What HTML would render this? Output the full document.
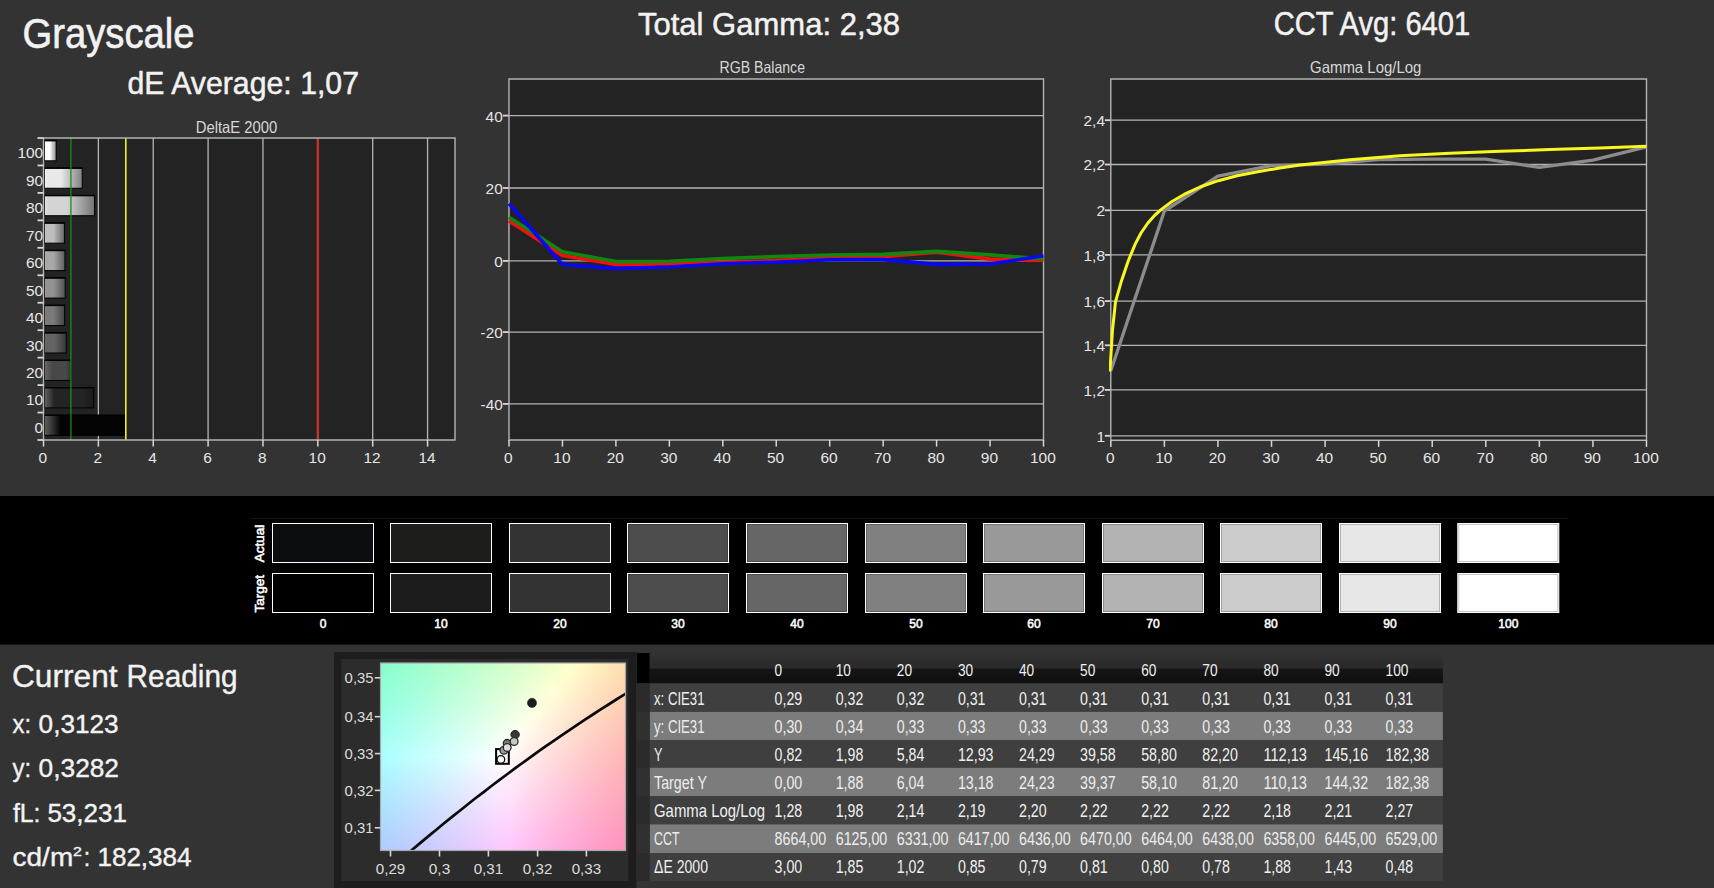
<!DOCTYPE html>
<html><head><meta charset="utf-8"><title>Grayscale</title>
<style>
html,body{margin:0;padding:0;background:#333333;}
body{width:1714px;height:888px;overflow:hidden;font-family:"Liberation Sans", sans-serif;}
svg{display:block;font-family:"Liberation Sans", sans-serif;}
</style></head><body>
<svg width="1714" height="888" viewBox="0 0 1714 888">
<defs>
<linearGradient id="b100" x1="0" x2="1" y1="0" y2="0"><stop offset="0" stop-color="rgb(255,255,255)"/><stop offset="0.08" stop-color="rgb(255,255,255)"/><stop offset="0.45" stop-color="rgb(255,255,255)"/><stop offset="1" stop-color="rgb(140,140,140)"/></linearGradient>
<linearGradient id="b90" x1="0" x2="1" y1="0" y2="0"><stop offset="0" stop-color="rgb(246,246,246)"/><stop offset="0.08" stop-color="rgb(232,232,232)"/><stop offset="0.45" stop-color="rgb(232,232,232)"/><stop offset="1" stop-color="rgb(127,127,127)"/></linearGradient>
<linearGradient id="b80" x1="0" x2="1" y1="0" y2="0"><stop offset="0" stop-color="rgb(226,226,226)"/><stop offset="0.08" stop-color="rgb(212,212,212)"/><stop offset="0.45" stop-color="rgb(212,212,212)"/><stop offset="1" stop-color="rgb(116,116,116)"/></linearGradient>
<linearGradient id="b70" x1="0" x2="1" y1="0" y2="0"><stop offset="0" stop-color="rgb(204,204,204)"/><stop offset="0.08" stop-color="rgb(190,190,190)"/><stop offset="0.45" stop-color="rgb(190,190,190)"/><stop offset="1" stop-color="rgb(104,104,104)"/></linearGradient>
<linearGradient id="b60" x1="0" x2="1" y1="0" y2="0"><stop offset="0" stop-color="rgb(182,182,182)"/><stop offset="0.08" stop-color="rgb(168,168,168)"/><stop offset="0.45" stop-color="rgb(168,168,168)"/><stop offset="1" stop-color="rgb(92,92,92)"/></linearGradient>
<linearGradient id="b50" x1="0" x2="1" y1="0" y2="0"><stop offset="0" stop-color="rgb(160,160,160)"/><stop offset="0.08" stop-color="rgb(146,146,146)"/><stop offset="0.45" stop-color="rgb(146,146,146)"/><stop offset="1" stop-color="rgb(80,80,80)"/></linearGradient>
<linearGradient id="b40" x1="0" x2="1" y1="0" y2="0"><stop offset="0" stop-color="rgb(136,136,136)"/><stop offset="0.08" stop-color="rgb(122,122,122)"/><stop offset="0.45" stop-color="rgb(122,122,122)"/><stop offset="1" stop-color="rgb(67,67,67)"/></linearGradient>
<linearGradient id="b30" x1="0" x2="1" y1="0" y2="0"><stop offset="0" stop-color="rgb(114,114,114)"/><stop offset="0.08" stop-color="rgb(100,100,100)"/><stop offset="0.45" stop-color="rgb(100,100,100)"/><stop offset="1" stop-color="rgb(55,55,55)"/></linearGradient>
<linearGradient id="b20" x1="0" x2="1" y1="0" y2="0"><stop offset="0" stop-color="rgb(104,104,104)"/><stop offset="0.3" stop-color="rgb(72,72,72)"/><stop offset="0.8" stop-color="rgb(72,72,72)"/><stop offset="1" stop-color="rgb(54,54,54)"/></linearGradient>
<linearGradient id="b10" x1="0" x2="1" y1="0" y2="0"><stop offset="0" stop-color="rgb(100,100,100)"/><stop offset="0.2" stop-color="rgb(36,36,36)"/><stop offset="0.8" stop-color="rgb(36,36,36)"/><stop offset="1" stop-color="rgb(27,27,27)"/></linearGradient>
<linearGradient id="b0" x1="0" x2="1" y1="0" y2="0"><stop offset="0" stop-color="rgb(96,96,96)"/><stop offset="0.2" stop-color="rgb(4,4,4)"/><stop offset="0.8" stop-color="rgb(4,4,4)"/><stop offset="1" stop-color="rgb(3,3,3)"/></linearGradient>
<linearGradient id="hdr" x1="0" x2="0" y1="0" y2="1"><stop offset="0" stop-color="#323232"/><stop offset="0.5" stop-color="#2a2a2a"/><stop offset="0.52" stop-color="#161616"/><stop offset="1" stop-color="#0e0e0e"/></linearGradient>
<radialGradient id="cW" cx="0.50" cy="0.52" r="0.40"><stop offset="0" stop-color="#fff" stop-opacity="1"/><stop offset="0.25" stop-color="#fff" stop-opacity="0.9"/><stop offset="1" stop-color="#fff" stop-opacity="0"/></radialGradient>
<linearGradient id="cTop" x1="0" x2="1" y1="0" y2="0"><stop offset="0" stop-color="#8df7c0"/><stop offset="0.35" stop-color="#b8ffc6"/><stop offset="0.72" stop-color="#ffffc4"/><stop offset="1" stop-color="#ffdcae"/></linearGradient>
<linearGradient id="cBot" x1="0" x2="1" y1="0" y2="0"><stop offset="0" stop-color="#a4c0ff"/><stop offset="0.30" stop-color="#d0c8ff"/><stop offset="0.55" stop-color="#ffc4f8"/><stop offset="1" stop-color="#ff8cb0"/></linearGradient>
<linearGradient id="cMid" x1="0" x2="1" y1="0" y2="0"><stop offset="0" stop-color="#a6f4ff"/><stop offset="0.3" stop-color="#d4ffff"/><stop offset="0.5" stop-color="#ffffff"/><stop offset="0.75" stop-color="#ffe0d8"/><stop offset="1" stop-color="#ffb4b0"/></linearGradient>
<linearGradient id="mTop" x1="0" x2="0" y1="0" y2="1"><stop offset="0" stop-color="#fff"/><stop offset="0.55" stop-color="#000"/></linearGradient>
<linearGradient id="mBot" x1="0" x2="0" y1="0" y2="1"><stop offset="0.5" stop-color="#000"/><stop offset="1" stop-color="#fff"/></linearGradient>
<mask id="mkTop" maskContentUnits="objectBoundingBox"><rect x="0" y="0" width="1" height="1" fill="url(#mTop)"/></mask>
<mask id="mkBot" maskContentUnits="objectBoundingBox"><rect x="0" y="0" width="1" height="1" fill="url(#mBot)"/></mask>
<clipPath id="cieclip"><rect x="380.5" y="663" width="245" height="187.5"/></clipPath>
<clipPath id="rgbclip"><rect x="508" y="79" width="537" height="362"/></clipPath>
<clipPath id="gamclip"><rect x="1109" y="79" width="539" height="362"/></clipPath>

</defs>
<rect x="0.00" y="0.00" width="1714.00" height="888.00" fill="#333333"/>
<rect x="0.00" y="496.00" width="1714.00" height="148.50" fill="#000000"/>
<line x1="250.00" y1="518.50" x2="1568.00" y2="518.50" stroke="#131313" stroke-width="1"/>
<text x="22.5" y="47.9" font-size="42" text-anchor="start" fill="#f2f2f2" font-weight="normal" textLength="172.0" lengthAdjust="spacingAndGlyphs" stroke="#f2f2f2" stroke-width="0.6">Grayscale</text>
<text x="127.5" y="94.3" font-size="32" text-anchor="start" fill="#f2f2f2" font-weight="normal" textLength="231.5" lengthAdjust="spacingAndGlyphs" stroke="#f2f2f2" stroke-width="0.5">dE Average: 1,07</text>
<text x="638.0" y="35.0" font-size="32" text-anchor="start" fill="#f2f2f2" font-weight="normal" textLength="262.0" lengthAdjust="spacingAndGlyphs" stroke="#f2f2f2" stroke-width="0.5">Total Gamma: 2,38</text>
<text x="1273.7" y="35.1" font-size="32.5" text-anchor="start" fill="#f2f2f2" font-weight="normal" textLength="196.5" lengthAdjust="spacingAndGlyphs" stroke="#f2f2f2" stroke-width="0.5">CCT Avg: 6401</text>
<text x="195.7" y="133.2" font-size="16.5" text-anchor="start" fill="#d8d8d8" font-weight="normal" textLength="81.6" lengthAdjust="spacingAndGlyphs">DeltaE 2000</text>
<text x="719.6" y="73.1" font-size="16.5" text-anchor="start" fill="#d8d8d8" font-weight="normal" textLength="85.4" lengthAdjust="spacingAndGlyphs">RGB Balance</text>
<text x="1310.0" y="73.3" font-size="16.5" text-anchor="start" fill="#d8d8d8" font-weight="normal" textLength="111.4" lengthAdjust="spacingAndGlyphs">Gamma Log/Log</text>
<rect x="43.50" y="138.00" width="411.50" height="302.00" fill="#232323"/>
<line x1="98.37" y1="138.00" x2="98.37" y2="440.00" stroke="#b4b4b4" stroke-width="1.3"/>
<line x1="153.23" y1="138.00" x2="153.23" y2="440.00" stroke="#b4b4b4" stroke-width="1.3"/>
<line x1="208.10" y1="138.00" x2="208.10" y2="440.00" stroke="#b4b4b4" stroke-width="1.3"/>
<line x1="262.97" y1="138.00" x2="262.97" y2="440.00" stroke="#b4b4b4" stroke-width="1.3"/>
<line x1="372.70" y1="138.00" x2="372.70" y2="440.00" stroke="#b4b4b4" stroke-width="1.3"/>
<line x1="427.57" y1="138.00" x2="427.57" y2="440.00" stroke="#b4b4b4" stroke-width="1.3"/>
<rect x="44.40" y="140.90" width="11.77" height="19.90" fill="url(#b100)" stroke="#000" stroke-width="1.0"/>
<line x1="43.90" y1="140.40" x2="56.67" y2="140.40" stroke="#000" stroke-width="1.1"/>
<rect x="44.40" y="168.35" width="37.83" height="19.90" fill="url(#b90)" stroke="#000" stroke-width="1.0"/>
<line x1="43.90" y1="167.85" x2="82.73" y2="167.85" stroke="#000" stroke-width="1.1"/>
<rect x="44.40" y="195.81" width="50.17" height="19.90" fill="url(#b80)" stroke="#000" stroke-width="1.0"/>
<line x1="43.90" y1="195.31" x2="95.07" y2="195.31" stroke="#000" stroke-width="1.1"/>
<rect x="44.40" y="223.26" width="20.00" height="19.90" fill="url(#b70)" stroke="#000" stroke-width="1.0"/>
<line x1="43.90" y1="222.76" x2="64.90" y2="222.76" stroke="#000" stroke-width="1.1"/>
<rect x="44.40" y="250.72" width="20.55" height="19.90" fill="url(#b60)" stroke="#000" stroke-width="1.0"/>
<line x1="43.90" y1="250.22" x2="65.45" y2="250.22" stroke="#000" stroke-width="1.1"/>
<rect x="44.40" y="278.17" width="20.82" height="19.90" fill="url(#b50)" stroke="#000" stroke-width="1.0"/>
<line x1="43.90" y1="277.67" x2="65.72" y2="277.67" stroke="#000" stroke-width="1.1"/>
<rect x="44.40" y="305.63" width="20.27" height="19.90" fill="url(#b40)" stroke="#000" stroke-width="1.0"/>
<line x1="43.90" y1="305.13" x2="65.17" y2="305.13" stroke="#000" stroke-width="1.1"/>
<rect x="44.40" y="333.08" width="21.92" height="19.90" fill="url(#b30)" stroke="#000" stroke-width="1.0"/>
<line x1="43.90" y1="332.58" x2="66.82" y2="332.58" stroke="#000" stroke-width="1.1"/>
<rect x="44.40" y="360.54" width="26.58" height="19.90" fill="url(#b20)" stroke="#000" stroke-width="1.0"/>
<line x1="43.90" y1="360.04" x2="71.48" y2="360.04" stroke="#000" stroke-width="1.1"/>
<rect x="44.40" y="387.99" width="49.35" height="19.90" fill="url(#b10)" stroke="#000" stroke-width="1.0"/>
<line x1="43.90" y1="387.49" x2="94.25" y2="387.49" stroke="#000" stroke-width="1.1"/>
<rect x="44.40" y="415.45" width="80.90" height="19.90" fill="url(#b0)" stroke="#000" stroke-width="1.0"/>
<line x1="43.90" y1="414.95" x2="125.80" y2="414.95" stroke="#000" stroke-width="1.1"/>
<line x1="70.93" y1="138.00" x2="70.93" y2="440.00" stroke="#1a8c1a" stroke-width="1.3"/>
<line x1="125.80" y1="138.00" x2="125.80" y2="440.00" stroke="#f0f020" stroke-width="1.6"/>
<line x1="317.83" y1="138.00" x2="317.83" y2="440.00" stroke="#c4302b" stroke-width="2.4"/>
<path d="M43.5 138.0 H455.0 V440.0 H43.5 Z" fill="none" stroke="#b4b4b4" stroke-width="1.4"/>
<line x1="37.50" y1="138.00" x2="43.50" y2="138.00" stroke="#d6d6d6" stroke-width="1.8"/>
<line x1="37.50" y1="165.45" x2="43.50" y2="165.45" stroke="#d6d6d6" stroke-width="1.8"/>
<line x1="37.50" y1="192.91" x2="43.50" y2="192.91" stroke="#d6d6d6" stroke-width="1.8"/>
<line x1="37.50" y1="220.36" x2="43.50" y2="220.36" stroke="#d6d6d6" stroke-width="1.8"/>
<line x1="37.50" y1="247.82" x2="43.50" y2="247.82" stroke="#d6d6d6" stroke-width="1.8"/>
<line x1="37.50" y1="275.27" x2="43.50" y2="275.27" stroke="#d6d6d6" stroke-width="1.8"/>
<line x1="37.50" y1="302.73" x2="43.50" y2="302.73" stroke="#d6d6d6" stroke-width="1.8"/>
<line x1="37.50" y1="330.18" x2="43.50" y2="330.18" stroke="#d6d6d6" stroke-width="1.8"/>
<line x1="37.50" y1="357.64" x2="43.50" y2="357.64" stroke="#d6d6d6" stroke-width="1.8"/>
<line x1="37.50" y1="385.09" x2="43.50" y2="385.09" stroke="#d6d6d6" stroke-width="1.8"/>
<line x1="37.50" y1="412.55" x2="43.50" y2="412.55" stroke="#d6d6d6" stroke-width="1.8"/>
<line x1="37.50" y1="440.00" x2="43.50" y2="440.00" stroke="#d6d6d6" stroke-width="1.8"/>
<text x="43.2" y="158.3" font-size="15.2" text-anchor="end" fill="#e6e6e6" font-weight="normal" textLength="25.8" lengthAdjust="spacingAndGlyphs">100</text>
<text x="43.2" y="185.8" font-size="15.2" text-anchor="end" fill="#e6e6e6" font-weight="normal" textLength="17.2" lengthAdjust="spacingAndGlyphs">90</text>
<text x="43.2" y="213.2" font-size="15.2" text-anchor="end" fill="#e6e6e6" font-weight="normal" textLength="17.2" lengthAdjust="spacingAndGlyphs">80</text>
<text x="43.2" y="240.7" font-size="15.2" text-anchor="end" fill="#e6e6e6" font-weight="normal" textLength="17.2" lengthAdjust="spacingAndGlyphs">70</text>
<text x="43.2" y="268.1" font-size="15.2" text-anchor="end" fill="#e6e6e6" font-weight="normal" textLength="17.2" lengthAdjust="spacingAndGlyphs">60</text>
<text x="43.2" y="295.6" font-size="15.2" text-anchor="end" fill="#e6e6e6" font-weight="normal" textLength="17.2" lengthAdjust="spacingAndGlyphs">50</text>
<text x="43.2" y="323.1" font-size="15.2" text-anchor="end" fill="#e6e6e6" font-weight="normal" textLength="17.2" lengthAdjust="spacingAndGlyphs">40</text>
<text x="43.2" y="350.5" font-size="15.2" text-anchor="end" fill="#e6e6e6" font-weight="normal" textLength="17.2" lengthAdjust="spacingAndGlyphs">30</text>
<text x="43.2" y="378.0" font-size="15.2" text-anchor="end" fill="#e6e6e6" font-weight="normal" textLength="17.2" lengthAdjust="spacingAndGlyphs">20</text>
<text x="43.2" y="405.4" font-size="15.2" text-anchor="end" fill="#e6e6e6" font-weight="normal" textLength="17.2" lengthAdjust="spacingAndGlyphs">10</text>
<text x="43.2" y="432.9" font-size="15.2" text-anchor="end" fill="#e6e6e6" font-weight="normal" textLength="8.6" lengthAdjust="spacingAndGlyphs">0</text>
<line x1="43.50" y1="440.00" x2="43.50" y2="446.60" stroke="#d6d6d6" stroke-width="1.5"/>
<text x="42.9" y="462.8" font-size="15.2" text-anchor="middle" fill="#e6e6e6" font-weight="normal" textLength="8.6" lengthAdjust="spacingAndGlyphs">0</text>
<line x1="98.37" y1="440.00" x2="98.37" y2="446.60" stroke="#d6d6d6" stroke-width="1.5"/>
<text x="97.8" y="462.8" font-size="15.2" text-anchor="middle" fill="#e6e6e6" font-weight="normal" textLength="8.6" lengthAdjust="spacingAndGlyphs">2</text>
<line x1="153.23" y1="440.00" x2="153.23" y2="446.60" stroke="#d6d6d6" stroke-width="1.5"/>
<text x="152.6" y="462.8" font-size="15.2" text-anchor="middle" fill="#e6e6e6" font-weight="normal" textLength="8.6" lengthAdjust="spacingAndGlyphs">4</text>
<line x1="208.10" y1="440.00" x2="208.10" y2="446.60" stroke="#d6d6d6" stroke-width="1.5"/>
<text x="207.5" y="462.8" font-size="15.2" text-anchor="middle" fill="#e6e6e6" font-weight="normal" textLength="8.6" lengthAdjust="spacingAndGlyphs">6</text>
<line x1="262.97" y1="440.00" x2="262.97" y2="446.60" stroke="#d6d6d6" stroke-width="1.5"/>
<text x="262.4" y="462.8" font-size="15.2" text-anchor="middle" fill="#e6e6e6" font-weight="normal" textLength="8.6" lengthAdjust="spacingAndGlyphs">8</text>
<line x1="317.83" y1="440.00" x2="317.83" y2="446.60" stroke="#d6d6d6" stroke-width="1.5"/>
<text x="317.2" y="462.8" font-size="15.2" text-anchor="middle" fill="#e6e6e6" font-weight="normal" textLength="17.2" lengthAdjust="spacingAndGlyphs">10</text>
<line x1="372.70" y1="440.00" x2="372.70" y2="446.60" stroke="#d6d6d6" stroke-width="1.5"/>
<text x="372.1" y="462.8" font-size="15.2" text-anchor="middle" fill="#e6e6e6" font-weight="normal" textLength="17.2" lengthAdjust="spacingAndGlyphs">12</text>
<line x1="427.57" y1="440.00" x2="427.57" y2="446.60" stroke="#d6d6d6" stroke-width="1.5"/>
<text x="427.0" y="462.8" font-size="15.2" text-anchor="middle" fill="#e6e6e6" font-weight="normal" textLength="17.2" lengthAdjust="spacingAndGlyphs">14</text>
<rect x="509.00" y="79.00" width="534.50" height="361.00" fill="#232323"/>
<line x1="509.00" y1="115.60" x2="1043.50" y2="115.60" stroke="#b4b4b4" stroke-width="1.3"/>
<line x1="503.00" y1="115.60" x2="509.00" y2="115.60" stroke="#d6d6d6" stroke-width="1.8"/>
<text x="502.8" y="121.5" font-size="15.2" text-anchor="end" fill="#e6e6e6" font-weight="normal" textLength="17.2" lengthAdjust="spacingAndGlyphs">40</text>
<line x1="509.00" y1="188.00" x2="1043.50" y2="188.00" stroke="#b4b4b4" stroke-width="1.3"/>
<line x1="503.00" y1="188.00" x2="509.00" y2="188.00" stroke="#d6d6d6" stroke-width="1.8"/>
<text x="502.8" y="193.9" font-size="15.2" text-anchor="end" fill="#e6e6e6" font-weight="normal" textLength="17.2" lengthAdjust="spacingAndGlyphs">20</text>
<line x1="509.00" y1="260.90" x2="1043.50" y2="260.90" stroke="#b4b4b4" stroke-width="1.3"/>
<line x1="503.00" y1="260.90" x2="509.00" y2="260.90" stroke="#d6d6d6" stroke-width="1.8"/>
<text x="502.8" y="266.8" font-size="15.2" text-anchor="end" fill="#e6e6e6" font-weight="normal" textLength="8.6" lengthAdjust="spacingAndGlyphs">0</text>
<line x1="509.00" y1="332.10" x2="1043.50" y2="332.10" stroke="#b4b4b4" stroke-width="1.3"/>
<line x1="503.00" y1="332.10" x2="509.00" y2="332.10" stroke="#d6d6d6" stroke-width="1.8"/>
<text x="502.8" y="338.0" font-size="15.2" text-anchor="end" fill="#e6e6e6" font-weight="normal" textLength="22.2" lengthAdjust="spacingAndGlyphs">-20</text>
<line x1="509.00" y1="403.90" x2="1043.50" y2="403.90" stroke="#b4b4b4" stroke-width="1.3"/>
<line x1="503.00" y1="403.90" x2="509.00" y2="403.90" stroke="#d6d6d6" stroke-width="1.8"/>
<text x="502.8" y="409.8" font-size="15.2" text-anchor="end" fill="#e6e6e6" font-weight="normal" textLength="22.2" lengthAdjust="spacingAndGlyphs">-40</text>
<path d="M509.0 79.0 H1043.5 V440.0 H509.0 Z" fill="none" stroke="#b4b4b4" stroke-width="1.4"/>
<line x1="509.00" y1="440.00" x2="509.00" y2="446.60" stroke="#d6d6d6" stroke-width="1.5"/>
<text x="508.4" y="462.8" font-size="15.2" text-anchor="middle" fill="#e6e6e6" font-weight="normal" textLength="8.6" lengthAdjust="spacingAndGlyphs">0</text>
<line x1="562.45" y1="440.00" x2="562.45" y2="446.60" stroke="#d6d6d6" stroke-width="1.5"/>
<text x="561.9" y="462.8" font-size="15.2" text-anchor="middle" fill="#e6e6e6" font-weight="normal" textLength="17.2" lengthAdjust="spacingAndGlyphs">10</text>
<line x1="615.90" y1="440.00" x2="615.90" y2="446.60" stroke="#d6d6d6" stroke-width="1.5"/>
<text x="615.3" y="462.8" font-size="15.2" text-anchor="middle" fill="#e6e6e6" font-weight="normal" textLength="17.2" lengthAdjust="spacingAndGlyphs">20</text>
<line x1="669.35" y1="440.00" x2="669.35" y2="446.60" stroke="#d6d6d6" stroke-width="1.5"/>
<text x="668.8" y="462.8" font-size="15.2" text-anchor="middle" fill="#e6e6e6" font-weight="normal" textLength="17.2" lengthAdjust="spacingAndGlyphs">30</text>
<line x1="722.80" y1="440.00" x2="722.80" y2="446.60" stroke="#d6d6d6" stroke-width="1.5"/>
<text x="722.2" y="462.8" font-size="15.2" text-anchor="middle" fill="#e6e6e6" font-weight="normal" textLength="17.2" lengthAdjust="spacingAndGlyphs">40</text>
<line x1="776.25" y1="440.00" x2="776.25" y2="446.60" stroke="#d6d6d6" stroke-width="1.5"/>
<text x="775.6" y="462.8" font-size="15.2" text-anchor="middle" fill="#e6e6e6" font-weight="normal" textLength="17.2" lengthAdjust="spacingAndGlyphs">50</text>
<line x1="829.70" y1="440.00" x2="829.70" y2="446.60" stroke="#d6d6d6" stroke-width="1.5"/>
<text x="829.1" y="462.8" font-size="15.2" text-anchor="middle" fill="#e6e6e6" font-weight="normal" textLength="17.2" lengthAdjust="spacingAndGlyphs">60</text>
<line x1="883.15" y1="440.00" x2="883.15" y2="446.60" stroke="#d6d6d6" stroke-width="1.5"/>
<text x="882.6" y="462.8" font-size="15.2" text-anchor="middle" fill="#e6e6e6" font-weight="normal" textLength="17.2" lengthAdjust="spacingAndGlyphs">70</text>
<line x1="936.60" y1="440.00" x2="936.60" y2="446.60" stroke="#d6d6d6" stroke-width="1.5"/>
<text x="936.0" y="462.8" font-size="15.2" text-anchor="middle" fill="#e6e6e6" font-weight="normal" textLength="17.2" lengthAdjust="spacingAndGlyphs">80</text>
<line x1="990.05" y1="440.00" x2="990.05" y2="446.60" stroke="#d6d6d6" stroke-width="1.5"/>
<text x="989.4" y="462.8" font-size="15.2" text-anchor="middle" fill="#e6e6e6" font-weight="normal" textLength="17.2" lengthAdjust="spacingAndGlyphs">90</text>
<line x1="1043.50" y1="440.00" x2="1043.50" y2="446.60" stroke="#d6d6d6" stroke-width="1.5"/>
<text x="1042.9" y="462.8" font-size="15.2" text-anchor="middle" fill="#e6e6e6" font-weight="normal" textLength="25.8" lengthAdjust="spacingAndGlyphs">100</text>
<polyline points="509.0,221.1 562.5,255.6 615.9,264.6 669.4,264.0 722.8,262.2 776.2,260.6 829.7,257.2 883.2,256.7 936.6,252.1 990.0,259.1 1043.5,260.4" fill="none" stroke="#f01010" stroke-width="3.6" stroke-linejoin="round" clip-path="url(#rgbclip)"/>
<polyline points="509.0,217.3 562.5,251.8 615.9,261.6 669.4,261.2 722.8,258.6 776.2,256.6 829.7,255.0 883.2,254.4 936.6,251.4 990.0,254.9 1043.5,259.0" fill="none" stroke="#108810" stroke-width="3.6" stroke-linejoin="round" clip-path="url(#rgbclip)"/>
<polyline points="509.0,203.6 562.5,264.5 615.9,268.6 669.4,267.0 722.8,263.8 776.2,262.2 829.7,259.8 883.2,259.6 936.6,264.4 990.0,264.0 1043.5,255.8" fill="none" stroke="#0808f0" stroke-width="3.6" stroke-linejoin="round" clip-path="url(#rgbclip)"/>
<rect x="1110.80" y="79.00" width="535.70" height="361.30" fill="#232323"/>
<line x1="1110.80" y1="120.20" x2="1646.50" y2="120.20" stroke="#b4b4b4" stroke-width="1.3"/>
<line x1="1104.80" y1="120.20" x2="1110.80" y2="120.20" stroke="#d6d6d6" stroke-width="1.8"/>
<text x="1105.0" y="126.1" font-size="15.2" text-anchor="end" fill="#e6e6e6" font-weight="normal" textLength="21.5" lengthAdjust="spacingAndGlyphs">2,4</text>
<line x1="1110.80" y1="164.50" x2="1646.50" y2="164.50" stroke="#b4b4b4" stroke-width="1.3"/>
<line x1="1104.80" y1="164.50" x2="1110.80" y2="164.50" stroke="#d6d6d6" stroke-width="1.8"/>
<text x="1105.0" y="170.4" font-size="15.2" text-anchor="end" fill="#e6e6e6" font-weight="normal" textLength="21.5" lengthAdjust="spacingAndGlyphs">2,2</text>
<line x1="1110.80" y1="210.30" x2="1646.50" y2="210.30" stroke="#b4b4b4" stroke-width="1.3"/>
<line x1="1104.80" y1="210.30" x2="1110.80" y2="210.30" stroke="#d6d6d6" stroke-width="1.8"/>
<text x="1105.0" y="216.2" font-size="15.2" text-anchor="end" fill="#e6e6e6" font-weight="normal" textLength="8.6" lengthAdjust="spacingAndGlyphs">2</text>
<line x1="1110.80" y1="254.90" x2="1646.50" y2="254.90" stroke="#b4b4b4" stroke-width="1.3"/>
<line x1="1104.80" y1="254.90" x2="1110.80" y2="254.90" stroke="#d6d6d6" stroke-width="1.8"/>
<text x="1105.0" y="260.8" font-size="15.2" text-anchor="end" fill="#e6e6e6" font-weight="normal" textLength="21.5" lengthAdjust="spacingAndGlyphs">1,8</text>
<line x1="1110.80" y1="301.10" x2="1646.50" y2="301.10" stroke="#b4b4b4" stroke-width="1.3"/>
<line x1="1104.80" y1="301.10" x2="1110.80" y2="301.10" stroke="#d6d6d6" stroke-width="1.8"/>
<text x="1105.0" y="307.0" font-size="15.2" text-anchor="end" fill="#e6e6e6" font-weight="normal" textLength="21.5" lengthAdjust="spacingAndGlyphs">1,6</text>
<line x1="1110.80" y1="345.30" x2="1646.50" y2="345.30" stroke="#b4b4b4" stroke-width="1.3"/>
<line x1="1104.80" y1="345.30" x2="1110.80" y2="345.30" stroke="#d6d6d6" stroke-width="1.8"/>
<text x="1105.0" y="351.2" font-size="15.2" text-anchor="end" fill="#e6e6e6" font-weight="normal" textLength="21.5" lengthAdjust="spacingAndGlyphs">1,4</text>
<line x1="1110.80" y1="389.90" x2="1646.50" y2="389.90" stroke="#b4b4b4" stroke-width="1.3"/>
<line x1="1104.80" y1="389.90" x2="1110.80" y2="389.90" stroke="#d6d6d6" stroke-width="1.8"/>
<text x="1105.0" y="395.8" font-size="15.2" text-anchor="end" fill="#e6e6e6" font-weight="normal" textLength="21.5" lengthAdjust="spacingAndGlyphs">1,2</text>
<line x1="1110.80" y1="435.80" x2="1646.50" y2="435.80" stroke="#b4b4b4" stroke-width="1.3"/>
<line x1="1104.80" y1="435.80" x2="1110.80" y2="435.80" stroke="#d6d6d6" stroke-width="1.8"/>
<text x="1105.0" y="441.7" font-size="15.2" text-anchor="end" fill="#e6e6e6" font-weight="normal" textLength="8.6" lengthAdjust="spacingAndGlyphs">1</text>
<path d="M1110.8 79.0 H1646.5 V440.3 H1110.8 Z" fill="none" stroke="#b4b4b4" stroke-width="1.4"/>
<line x1="1110.80" y1="440.30" x2="1110.80" y2="446.90" stroke="#d6d6d6" stroke-width="1.5"/>
<text x="1110.2" y="462.8" font-size="15.2" text-anchor="middle" fill="#e6e6e6" font-weight="normal" textLength="8.6" lengthAdjust="spacingAndGlyphs">0</text>
<line x1="1164.37" y1="440.30" x2="1164.37" y2="446.90" stroke="#d6d6d6" stroke-width="1.5"/>
<text x="1163.8" y="462.8" font-size="15.2" text-anchor="middle" fill="#e6e6e6" font-weight="normal" textLength="17.2" lengthAdjust="spacingAndGlyphs">10</text>
<line x1="1217.94" y1="440.30" x2="1217.94" y2="446.90" stroke="#d6d6d6" stroke-width="1.5"/>
<text x="1217.3" y="462.8" font-size="15.2" text-anchor="middle" fill="#e6e6e6" font-weight="normal" textLength="17.2" lengthAdjust="spacingAndGlyphs">20</text>
<line x1="1271.51" y1="440.30" x2="1271.51" y2="446.90" stroke="#d6d6d6" stroke-width="1.5"/>
<text x="1270.9" y="462.8" font-size="15.2" text-anchor="middle" fill="#e6e6e6" font-weight="normal" textLength="17.2" lengthAdjust="spacingAndGlyphs">30</text>
<line x1="1325.08" y1="440.30" x2="1325.08" y2="446.90" stroke="#d6d6d6" stroke-width="1.5"/>
<text x="1324.5" y="462.8" font-size="15.2" text-anchor="middle" fill="#e6e6e6" font-weight="normal" textLength="17.2" lengthAdjust="spacingAndGlyphs">40</text>
<line x1="1378.65" y1="440.30" x2="1378.65" y2="446.90" stroke="#d6d6d6" stroke-width="1.5"/>
<text x="1378.1" y="462.8" font-size="15.2" text-anchor="middle" fill="#e6e6e6" font-weight="normal" textLength="17.2" lengthAdjust="spacingAndGlyphs">50</text>
<line x1="1432.22" y1="440.30" x2="1432.22" y2="446.90" stroke="#d6d6d6" stroke-width="1.5"/>
<text x="1431.6" y="462.8" font-size="15.2" text-anchor="middle" fill="#e6e6e6" font-weight="normal" textLength="17.2" lengthAdjust="spacingAndGlyphs">60</text>
<line x1="1485.79" y1="440.30" x2="1485.79" y2="446.90" stroke="#d6d6d6" stroke-width="1.5"/>
<text x="1485.2" y="462.8" font-size="15.2" text-anchor="middle" fill="#e6e6e6" font-weight="normal" textLength="17.2" lengthAdjust="spacingAndGlyphs">70</text>
<line x1="1539.36" y1="440.30" x2="1539.36" y2="446.90" stroke="#d6d6d6" stroke-width="1.5"/>
<text x="1538.8" y="462.8" font-size="15.2" text-anchor="middle" fill="#e6e6e6" font-weight="normal" textLength="17.2" lengthAdjust="spacingAndGlyphs">80</text>
<line x1="1592.93" y1="440.30" x2="1592.93" y2="446.90" stroke="#d6d6d6" stroke-width="1.5"/>
<text x="1592.3" y="462.8" font-size="15.2" text-anchor="middle" fill="#e6e6e6" font-weight="normal" textLength="17.2" lengthAdjust="spacingAndGlyphs">90</text>
<line x1="1646.50" y1="440.30" x2="1646.50" y2="446.90" stroke="#d6d6d6" stroke-width="1.5"/>
<text x="1645.9" y="462.8" font-size="15.2" text-anchor="middle" fill="#e6e6e6" font-weight="normal" textLength="25.8" lengthAdjust="spacingAndGlyphs">100</text>
<polyline points="1110.8,370.8 1164.4,211.0 1217.9,176.2 1271.5,165.6 1325.1,164.2 1378.7,159.6 1432.2,159.2 1485.8,159.2 1539.4,167.4 1592.9,160.2 1646.5,146.8" fill="none" stroke="#8c8c8c" stroke-width="3.3" stroke-linejoin="round" clip-path="url(#gamclip)"/>
<polyline points="1109.9,371.5 1112.5,330.0 1115.5,301.8 1121.1,282.1 1128.2,261.0 1135.2,244.1 1141.0,233.0 1147.9,223.0 1155.0,215.0 1162.0,208.9 1172.0,201.5 1184.5,194.2 1200.0,187.0 1218.3,180.7 1237.0,175.8 1257.7,171.7 1280.0,168.0 1300.0,165.0 1350.0,159.8 1400.0,155.7 1450.0,153.2 1500.0,151.3 1550.0,149.6 1600.0,148.1 1646.5,146.2" fill="none" stroke="#f8f820" stroke-width="3" stroke-linejoin="round" clip-path="url(#gamclip)"/>
<rect x="272.50" y="523.50" width="101.00" height="39.00" fill="#0c0d11" stroke="#ffffff" stroke-width="1"/>
<rect x="272.50" y="573.50" width="101.00" height="39.00" fill="#000000" stroke="#ffffff" stroke-width="1"/>
<text x="323.0" y="627.7" font-size="12.5" text-anchor="middle" fill="#ffffff" font-weight="normal" textLength="6.7" lengthAdjust="spacingAndGlyphs" stroke="#ffffff" stroke-width="0.55">0</text>
<rect x="390.50" y="523.50" width="101.00" height="39.00" fill="#1d1d1c" stroke="#ffffff" stroke-width="1"/>
<rect x="390.50" y="573.50" width="101.00" height="39.00" fill="#1c1c1c" stroke="#ffffff" stroke-width="1"/>
<text x="441.0" y="627.7" font-size="12.5" text-anchor="middle" fill="#ffffff" font-weight="normal" textLength="13.4" lengthAdjust="spacingAndGlyphs" stroke="#ffffff" stroke-width="0.55">10</text>
<rect x="509.50" y="523.50" width="101.00" height="39.00" fill="#333333" stroke="#ffffff" stroke-width="1"/>
<rect x="509.50" y="573.50" width="101.00" height="39.00" fill="#333333" stroke="#ffffff" stroke-width="1"/>
<text x="560.0" y="627.7" font-size="12.5" text-anchor="middle" fill="#ffffff" font-weight="normal" textLength="13.4" lengthAdjust="spacingAndGlyphs" stroke="#ffffff" stroke-width="0.55">20</text>
<rect x="627.50" y="523.50" width="101.00" height="39.00" fill="#4d4d4d" stroke="#ffffff" stroke-width="1"/>
<rect x="628.50" y="524.50" width="99.00" height="37.00" fill="none" stroke="#000" stroke-width="1" stroke-opacity="0.22"/>
<rect x="627.50" y="573.50" width="101.00" height="39.00" fill="#4d4d4d" stroke="#ffffff" stroke-width="1"/>
<rect x="628.50" y="574.50" width="99.00" height="37.00" fill="none" stroke="#000" stroke-width="1" stroke-opacity="0.22"/>
<text x="678.0" y="627.7" font-size="12.5" text-anchor="middle" fill="#ffffff" font-weight="normal" textLength="13.4" lengthAdjust="spacingAndGlyphs" stroke="#ffffff" stroke-width="0.55">30</text>
<rect x="746.50" y="523.50" width="101.00" height="39.00" fill="#666666" stroke="#ffffff" stroke-width="1"/>
<rect x="747.50" y="524.50" width="99.00" height="37.00" fill="none" stroke="#000" stroke-width="1" stroke-opacity="0.22"/>
<rect x="746.50" y="573.50" width="101.00" height="39.00" fill="#666666" stroke="#ffffff" stroke-width="1"/>
<rect x="747.50" y="574.50" width="99.00" height="37.00" fill="none" stroke="#000" stroke-width="1" stroke-opacity="0.22"/>
<text x="797.0" y="627.7" font-size="12.5" text-anchor="middle" fill="#ffffff" font-weight="normal" textLength="13.4" lengthAdjust="spacingAndGlyphs" stroke="#ffffff" stroke-width="0.55">40</text>
<rect x="865.50" y="523.50" width="101.00" height="39.00" fill="#808080" stroke="#ffffff" stroke-width="1"/>
<rect x="866.50" y="524.50" width="99.00" height="37.00" fill="none" stroke="#000" stroke-width="1" stroke-opacity="0.22"/>
<rect x="865.50" y="573.50" width="101.00" height="39.00" fill="#808080" stroke="#ffffff" stroke-width="1"/>
<rect x="866.50" y="574.50" width="99.00" height="37.00" fill="none" stroke="#000" stroke-width="1" stroke-opacity="0.22"/>
<text x="916.0" y="627.7" font-size="12.5" text-anchor="middle" fill="#ffffff" font-weight="normal" textLength="13.4" lengthAdjust="spacingAndGlyphs" stroke="#ffffff" stroke-width="0.55">50</text>
<rect x="983.50" y="523.50" width="101.00" height="39.00" fill="#999999" stroke="#ffffff" stroke-width="1"/>
<rect x="984.50" y="524.50" width="99.00" height="37.00" fill="none" stroke="#000" stroke-width="1" stroke-opacity="0.22"/>
<rect x="983.50" y="573.50" width="101.00" height="39.00" fill="#999999" stroke="#ffffff" stroke-width="1"/>
<rect x="984.50" y="574.50" width="99.00" height="37.00" fill="none" stroke="#000" stroke-width="1" stroke-opacity="0.22"/>
<text x="1034.0" y="627.7" font-size="12.5" text-anchor="middle" fill="#ffffff" font-weight="normal" textLength="13.4" lengthAdjust="spacingAndGlyphs" stroke="#ffffff" stroke-width="0.55">60</text>
<rect x="1102.50" y="523.50" width="101.00" height="39.00" fill="#b3b3b3" stroke="#ffffff" stroke-width="1"/>
<rect x="1103.50" y="524.50" width="99.00" height="37.00" fill="none" stroke="#000" stroke-width="1" stroke-opacity="0.22"/>
<rect x="1102.50" y="573.50" width="101.00" height="39.00" fill="#b3b3b3" stroke="#ffffff" stroke-width="1"/>
<rect x="1103.50" y="574.50" width="99.00" height="37.00" fill="none" stroke="#000" stroke-width="1" stroke-opacity="0.22"/>
<text x="1153.0" y="627.7" font-size="12.5" text-anchor="middle" fill="#ffffff" font-weight="normal" textLength="13.4" lengthAdjust="spacingAndGlyphs" stroke="#ffffff" stroke-width="0.55">70</text>
<rect x="1220.50" y="523.50" width="101.00" height="39.00" fill="#cccccc" stroke="#ffffff" stroke-width="1"/>
<rect x="1221.50" y="524.50" width="99.00" height="37.00" fill="none" stroke="#000" stroke-width="1" stroke-opacity="0.22"/>
<rect x="1220.50" y="573.50" width="101.00" height="39.00" fill="#cccccc" stroke="#ffffff" stroke-width="1"/>
<rect x="1221.50" y="574.50" width="99.00" height="37.00" fill="none" stroke="#000" stroke-width="1" stroke-opacity="0.22"/>
<text x="1271.0" y="627.7" font-size="12.5" text-anchor="middle" fill="#ffffff" font-weight="normal" textLength="13.4" lengthAdjust="spacingAndGlyphs" stroke="#ffffff" stroke-width="0.55">80</text>
<rect x="1339.50" y="523.50" width="101.00" height="39.00" fill="#e6e6e6" stroke="#ffffff" stroke-width="1"/>
<rect x="1340.50" y="524.50" width="99.00" height="37.00" fill="none" stroke="#000" stroke-width="1" stroke-opacity="0.22"/>
<rect x="1339.50" y="573.50" width="101.00" height="39.00" fill="#e6e6e6" stroke="#ffffff" stroke-width="1"/>
<rect x="1340.50" y="574.50" width="99.00" height="37.00" fill="none" stroke="#000" stroke-width="1" stroke-opacity="0.22"/>
<text x="1390.0" y="627.7" font-size="12.5" text-anchor="middle" fill="#ffffff" font-weight="normal" textLength="13.4" lengthAdjust="spacingAndGlyphs" stroke="#ffffff" stroke-width="0.55">90</text>
<rect x="1457.80" y="523.50" width="101.00" height="39.00" fill="#ffffff" stroke="#ffffff" stroke-width="1"/>
<rect x="1458.80" y="524.50" width="99.00" height="37.00" fill="none" stroke="#000" stroke-width="1" stroke-opacity="0.22"/>
<rect x="1457.80" y="573.50" width="101.00" height="39.00" fill="#ffffff" stroke="#ffffff" stroke-width="1"/>
<rect x="1458.80" y="574.50" width="99.00" height="37.00" fill="none" stroke="#000" stroke-width="1" stroke-opacity="0.22"/>
<text x="1508.3" y="627.7" font-size="12.5" text-anchor="middle" fill="#ffffff" font-weight="normal" textLength="20.1" lengthAdjust="spacingAndGlyphs" stroke="#ffffff" stroke-width="0.55">100</text>
<text transform="translate(264.0,562.2) rotate(-90)" font-size="12.5" font-weight="normal" stroke="#fff" stroke-width="0.55" fill="#fff" textLength="37.5" lengthAdjust="spacingAndGlyphs">Actual</text>
<text transform="translate(264.0,612.4) rotate(-90)" font-size="12.5" font-weight="normal" stroke="#fff" stroke-width="0.55" fill="#fff" textLength="37.5" lengthAdjust="spacingAndGlyphs">Target</text>
<text x="12.0" y="686.5" font-size="31.5" text-anchor="start" fill="#f2f2f2" font-weight="normal" textLength="105.6" lengthAdjust="spacingAndGlyphs" stroke="#f2f2f2" stroke-width="0.4">Current</text>
<text x="126.6" y="686.5" font-size="31.5" text-anchor="start" fill="#f2f2f2" font-weight="normal" textLength="111.0" lengthAdjust="spacingAndGlyphs" stroke="#f2f2f2" stroke-width="0.4">Reading</text>
<text x="12.6" y="732.8" font-size="26.5" text-anchor="start" fill="#f2f2f2" font-weight="normal" textLength="18.6" lengthAdjust="spacingAndGlyphs" stroke="#f2f2f2" stroke-width="0.4">x:</text>
<text x="38.6" y="732.8" font-size="26.5" text-anchor="start" fill="#f2f2f2" font-weight="normal" textLength="80.0" lengthAdjust="spacingAndGlyphs" stroke="#f2f2f2" stroke-width="0.4">0,3123</text>
<text x="12.6" y="777.0" font-size="26.5" text-anchor="start" fill="#f2f2f2" font-weight="normal" textLength="18.6" lengthAdjust="spacingAndGlyphs" stroke="#f2f2f2" stroke-width="0.4">y:</text>
<text x="38.6" y="777.0" font-size="26.5" text-anchor="start" fill="#f2f2f2" font-weight="normal" textLength="80.4" lengthAdjust="spacingAndGlyphs" stroke="#f2f2f2" stroke-width="0.4">0,3282</text>
<text x="12.9" y="821.5" font-size="26.5" text-anchor="start" fill="#f2f2f2" font-weight="normal" textLength="27.6" lengthAdjust="spacingAndGlyphs" stroke="#f2f2f2" stroke-width="0.4">fL:</text>
<text x="47.4" y="821.5" font-size="26.5" text-anchor="start" fill="#f2f2f2" font-weight="normal" textLength="79.6" lengthAdjust="spacingAndGlyphs" stroke="#f2f2f2" stroke-width="0.4">53,231</text>
<text x="12.6" y="865.6" font-size="26.5" text-anchor="start" fill="#f2f2f2" font-weight="normal" textLength="60.6" lengthAdjust="spacingAndGlyphs" stroke="#f2f2f2" stroke-width="0.4">cd/m</text>
<text x="73.1" y="855.9" font-size="13" text-anchor="start" fill="#f2f2f2" font-weight="normal" textLength="8.8" lengthAdjust="spacingAndGlyphs" stroke="#f2f2f2" stroke-width="0.4">2</text>
<text x="83.8" y="865.6" font-size="26.5" text-anchor="start" fill="#f2f2f2" font-weight="normal" textLength="6.4" lengthAdjust="spacingAndGlyphs" stroke="#f2f2f2" stroke-width="0.4">:</text>
<text x="97.4" y="865.6" font-size="26.5" text-anchor="start" fill="#f2f2f2" font-weight="normal" textLength="94.2" lengthAdjust="spacingAndGlyphs" stroke="#f2f2f2" stroke-width="0.4">182,384</text>
<rect x="334.00" y="652.00" width="302.30" height="240.00" fill="#1d1d1d"/>
<rect x="341.50" y="659.00" width="286.90" height="222.00" fill="#2c2c2c"/>
<g clip-path="url(#cieclip)">
<defs><linearGradient id="c0"><stop offset="0.000" stop-color="#87ffcf"/><stop offset="0.059" stop-color="#8fffce"/><stop offset="0.118" stop-color="#97ffce"/><stop offset="0.176" stop-color="#a0ffcd"/><stop offset="0.235" stop-color="#a8ffcd"/><stop offset="0.294" stop-color="#b1ffcd"/><stop offset="0.353" stop-color="#b9ffcc"/><stop offset="0.412" stop-color="#c2ffcc"/><stop offset="0.471" stop-color="#cbffcc"/><stop offset="0.529" stop-color="#d5ffcb"/><stop offset="0.588" stop-color="#deffcb"/><stop offset="0.647" stop-color="#e7ffca"/><stop offset="0.706" stop-color="#f1ffca"/><stop offset="0.765" stop-color="#fbffca"/><stop offset="0.824" stop-color="#fff9c5"/><stop offset="0.882" stop-color="#fff0bd"/><stop offset="0.941" stop-color="#ffe7b6"/><stop offset="1.000" stop-color="#ffdfaf"/></linearGradient><linearGradient id="c1"><stop offset="0.000" stop-color="#88ffd0"/><stop offset="0.059" stop-color="#90ffd0"/><stop offset="0.118" stop-color="#99ffd0"/><stop offset="0.176" stop-color="#a1ffcf"/><stop offset="0.235" stop-color="#aaffcf"/><stop offset="0.294" stop-color="#b2ffcf"/><stop offset="0.353" stop-color="#bbffce"/><stop offset="0.412" stop-color="#c4ffce"/><stop offset="0.471" stop-color="#cdffce"/><stop offset="0.529" stop-color="#d6ffcd"/><stop offset="0.588" stop-color="#e0ffcd"/><stop offset="0.647" stop-color="#e9ffcc"/><stop offset="0.706" stop-color="#f3ffcc"/><stop offset="0.765" stop-color="#fdffcc"/><stop offset="0.824" stop-color="#fff7c5"/><stop offset="0.882" stop-color="#ffeebd"/><stop offset="0.941" stop-color="#ffe5b6"/><stop offset="1.000" stop-color="#ffddaf"/></linearGradient><linearGradient id="c2"><stop offset="0.000" stop-color="#8affd2"/><stop offset="0.059" stop-color="#92ffd2"/><stop offset="0.118" stop-color="#9affd2"/><stop offset="0.176" stop-color="#a3ffd1"/><stop offset="0.235" stop-color="#abffd1"/><stop offset="0.294" stop-color="#b4ffd1"/><stop offset="0.353" stop-color="#bdffd0"/><stop offset="0.412" stop-color="#c6ffd0"/><stop offset="0.471" stop-color="#cfffd0"/><stop offset="0.529" stop-color="#d8ffcf"/><stop offset="0.588" stop-color="#e2ffcf"/><stop offset="0.647" stop-color="#ebffce"/><stop offset="0.706" stop-color="#f5ffce"/><stop offset="0.765" stop-color="#ffffce"/><stop offset="0.824" stop-color="#fff5c5"/><stop offset="0.882" stop-color="#ffecbe"/><stop offset="0.941" stop-color="#ffe3b6"/><stop offset="1.000" stop-color="#ffdbb0"/></linearGradient><linearGradient id="c3"><stop offset="0.000" stop-color="#8bffd4"/><stop offset="0.059" stop-color="#93ffd4"/><stop offset="0.118" stop-color="#9cffd4"/><stop offset="0.176" stop-color="#a4ffd3"/><stop offset="0.235" stop-color="#adffd3"/><stop offset="0.294" stop-color="#b6ffd3"/><stop offset="0.353" stop-color="#bfffd2"/><stop offset="0.412" stop-color="#c8ffd2"/><stop offset="0.471" stop-color="#d1ffd2"/><stop offset="0.529" stop-color="#daffd1"/><stop offset="0.588" stop-color="#e4ffd1"/><stop offset="0.647" stop-color="#edffd1"/><stop offset="0.706" stop-color="#f7ffd0"/><stop offset="0.765" stop-color="#fffdce"/><stop offset="0.824" stop-color="#fff3c6"/><stop offset="0.882" stop-color="#ffeabe"/><stop offset="0.941" stop-color="#ffe2b7"/><stop offset="1.000" stop-color="#ffd9b0"/></linearGradient><linearGradient id="c4"><stop offset="0.000" stop-color="#8dffd6"/><stop offset="0.059" stop-color="#95ffd6"/><stop offset="0.118" stop-color="#9dffd6"/><stop offset="0.176" stop-color="#a6ffd5"/><stop offset="0.235" stop-color="#afffd5"/><stop offset="0.294" stop-color="#b7ffd5"/><stop offset="0.353" stop-color="#c0ffd4"/><stop offset="0.412" stop-color="#caffd4"/><stop offset="0.471" stop-color="#d3ffd4"/><stop offset="0.529" stop-color="#dcffd3"/><stop offset="0.588" stop-color="#e6ffd3"/><stop offset="0.647" stop-color="#f0ffd3"/><stop offset="0.706" stop-color="#f9ffd2"/><stop offset="0.765" stop-color="#fffbce"/><stop offset="0.824" stop-color="#fff1c6"/><stop offset="0.882" stop-color="#ffe8be"/><stop offset="0.941" stop-color="#ffe0b7"/><stop offset="1.000" stop-color="#ffd8b0"/></linearGradient><linearGradient id="c5"><stop offset="0.000" stop-color="#8effd8"/><stop offset="0.059" stop-color="#96ffd8"/><stop offset="0.118" stop-color="#9fffd8"/><stop offset="0.176" stop-color="#a7ffd7"/><stop offset="0.235" stop-color="#b0ffd7"/><stop offset="0.294" stop-color="#b9ffd7"/><stop offset="0.353" stop-color="#c2ffd6"/><stop offset="0.412" stop-color="#cbffd6"/><stop offset="0.471" stop-color="#d5ffd6"/><stop offset="0.529" stop-color="#deffd5"/><stop offset="0.588" stop-color="#e8ffd5"/><stop offset="0.647" stop-color="#f2ffd5"/><stop offset="0.706" stop-color="#fcffd4"/><stop offset="0.765" stop-color="#fff8cf"/><stop offset="0.824" stop-color="#ffefc6"/><stop offset="0.882" stop-color="#ffe6bf"/><stop offset="0.941" stop-color="#ffdeb8"/><stop offset="1.000" stop-color="#ffd6b1"/></linearGradient><linearGradient id="c6"><stop offset="0.000" stop-color="#8fffda"/><stop offset="0.059" stop-color="#98ffda"/><stop offset="0.118" stop-color="#a0ffda"/><stop offset="0.176" stop-color="#a9ffd9"/><stop offset="0.235" stop-color="#b2ffd9"/><stop offset="0.294" stop-color="#bbffd9"/><stop offset="0.353" stop-color="#c4ffd8"/><stop offset="0.412" stop-color="#cdffd8"/><stop offset="0.471" stop-color="#d7ffd8"/><stop offset="0.529" stop-color="#e0ffd8"/><stop offset="0.588" stop-color="#eaffd7"/><stop offset="0.647" stop-color="#f4ffd7"/><stop offset="0.706" stop-color="#feffd7"/><stop offset="0.765" stop-color="#fff6cf"/><stop offset="0.824" stop-color="#ffedc7"/><stop offset="0.882" stop-color="#ffe4bf"/><stop offset="0.941" stop-color="#ffdcb8"/><stop offset="1.000" stop-color="#ffd4b1"/></linearGradient><linearGradient id="c7"><stop offset="0.000" stop-color="#91ffdc"/><stop offset="0.059" stop-color="#99ffdc"/><stop offset="0.118" stop-color="#a2ffdc"/><stop offset="0.176" stop-color="#abffdb"/><stop offset="0.235" stop-color="#b4ffdb"/><stop offset="0.294" stop-color="#bdffdb"/><stop offset="0.353" stop-color="#c6ffdb"/><stop offset="0.412" stop-color="#cfffda"/><stop offset="0.471" stop-color="#d9ffda"/><stop offset="0.529" stop-color="#e2ffda"/><stop offset="0.588" stop-color="#ecffd9"/><stop offset="0.647" stop-color="#f6ffd9"/><stop offset="0.706" stop-color="#fffed8"/><stop offset="0.765" stop-color="#fff4cf"/><stop offset="0.824" stop-color="#ffebc7"/><stop offset="0.882" stop-color="#ffe2bf"/><stop offset="0.941" stop-color="#ffdab8"/><stop offset="1.000" stop-color="#ffd2b1"/></linearGradient><linearGradient id="c8"><stop offset="0.000" stop-color="#92ffde"/><stop offset="0.059" stop-color="#9bffde"/><stop offset="0.118" stop-color="#a4ffde"/><stop offset="0.176" stop-color="#acffdd"/><stop offset="0.235" stop-color="#b5ffdd"/><stop offset="0.294" stop-color="#beffdd"/><stop offset="0.353" stop-color="#c8ffdd"/><stop offset="0.412" stop-color="#d1ffdc"/><stop offset="0.471" stop-color="#dbffdc"/><stop offset="0.529" stop-color="#e4ffdc"/><stop offset="0.588" stop-color="#eeffdc"/><stop offset="0.647" stop-color="#f8ffdb"/><stop offset="0.706" stop-color="#fffcd8"/><stop offset="0.765" stop-color="#fff2d0"/><stop offset="0.824" stop-color="#ffe9c7"/><stop offset="0.882" stop-color="#ffe0c0"/><stop offset="0.941" stop-color="#ffd8b9"/><stop offset="1.000" stop-color="#ffd0b2"/></linearGradient><linearGradient id="c9"><stop offset="0.000" stop-color="#94ffe0"/><stop offset="0.059" stop-color="#9cffe0"/><stop offset="0.118" stop-color="#a5ffe0"/><stop offset="0.176" stop-color="#aeffdf"/><stop offset="0.235" stop-color="#b7ffdf"/><stop offset="0.294" stop-color="#c0ffdf"/><stop offset="0.353" stop-color="#c9ffdf"/><stop offset="0.412" stop-color="#d3ffdf"/><stop offset="0.471" stop-color="#ddffde"/><stop offset="0.529" stop-color="#e6ffde"/><stop offset="0.588" stop-color="#f0ffde"/><stop offset="0.647" stop-color="#faffdd"/><stop offset="0.706" stop-color="#fffad8"/><stop offset="0.765" stop-color="#fff0d0"/><stop offset="0.824" stop-color="#ffe7c8"/><stop offset="0.882" stop-color="#ffdec0"/><stop offset="0.941" stop-color="#ffd6b9"/><stop offset="1.000" stop-color="#ffcfb2"/></linearGradient><linearGradient id="c10"><stop offset="0.000" stop-color="#95ffe2"/><stop offset="0.059" stop-color="#9effe2"/><stop offset="0.118" stop-color="#a7ffe2"/><stop offset="0.176" stop-color="#b0ffe2"/><stop offset="0.235" stop-color="#b9ffe1"/><stop offset="0.294" stop-color="#c2ffe1"/><stop offset="0.353" stop-color="#cbffe1"/><stop offset="0.412" stop-color="#d5ffe1"/><stop offset="0.471" stop-color="#dfffe0"/><stop offset="0.529" stop-color="#e8ffe0"/><stop offset="0.588" stop-color="#f2ffe0"/><stop offset="0.647" stop-color="#fdffe0"/><stop offset="0.706" stop-color="#fff7d9"/><stop offset="0.765" stop-color="#ffeed0"/><stop offset="0.824" stop-color="#ffe5c8"/><stop offset="0.882" stop-color="#ffdcc0"/><stop offset="0.941" stop-color="#ffd4b9"/><stop offset="1.000" stop-color="#ffcdb2"/></linearGradient><linearGradient id="c11"><stop offset="0.000" stop-color="#97ffe4"/><stop offset="0.059" stop-color="#a0ffe4"/><stop offset="0.118" stop-color="#a8ffe4"/><stop offset="0.176" stop-color="#b1ffe4"/><stop offset="0.235" stop-color="#bbffe4"/><stop offset="0.294" stop-color="#c4ffe3"/><stop offset="0.353" stop-color="#cdffe3"/><stop offset="0.412" stop-color="#d7ffe3"/><stop offset="0.471" stop-color="#e1ffe3"/><stop offset="0.529" stop-color="#eaffe2"/><stop offset="0.588" stop-color="#f5ffe2"/><stop offset="0.647" stop-color="#ffffe2"/><stop offset="0.706" stop-color="#fff5d9"/><stop offset="0.765" stop-color="#ffecd1"/><stop offset="0.824" stop-color="#ffe3c8"/><stop offset="0.882" stop-color="#ffdac1"/><stop offset="0.941" stop-color="#ffd3ba"/><stop offset="1.000" stop-color="#ffcbb3"/></linearGradient><linearGradient id="c12"><stop offset="0.000" stop-color="#98ffe6"/><stop offset="0.059" stop-color="#a1ffe6"/><stop offset="0.118" stop-color="#aaffe6"/><stop offset="0.176" stop-color="#b3ffe6"/><stop offset="0.235" stop-color="#bcffe6"/><stop offset="0.294" stop-color="#c6ffe6"/><stop offset="0.353" stop-color="#cfffe5"/><stop offset="0.412" stop-color="#d9ffe5"/><stop offset="0.471" stop-color="#e3ffe5"/><stop offset="0.529" stop-color="#edffe5"/><stop offset="0.588" stop-color="#f7ffe5"/><stop offset="0.647" stop-color="#fffde2"/><stop offset="0.706" stop-color="#fff3d9"/><stop offset="0.765" stop-color="#ffead1"/><stop offset="0.824" stop-color="#ffe1c9"/><stop offset="0.882" stop-color="#ffd9c1"/><stop offset="0.941" stop-color="#ffd1ba"/><stop offset="1.000" stop-color="#ffc9b3"/></linearGradient><linearGradient id="c13"><stop offset="0.000" stop-color="#9affe9"/><stop offset="0.059" stop-color="#a3ffe8"/><stop offset="0.118" stop-color="#acffe8"/><stop offset="0.176" stop-color="#b5ffe8"/><stop offset="0.235" stop-color="#beffe8"/><stop offset="0.294" stop-color="#c8ffe8"/><stop offset="0.353" stop-color="#d1ffe8"/><stop offset="0.412" stop-color="#dbffe7"/><stop offset="0.471" stop-color="#e5ffe7"/><stop offset="0.529" stop-color="#efffe7"/><stop offset="0.588" stop-color="#f9ffe7"/><stop offset="0.647" stop-color="#fffbe3"/><stop offset="0.706" stop-color="#fff1da"/><stop offset="0.765" stop-color="#ffe8d1"/><stop offset="0.824" stop-color="#ffdfc9"/><stop offset="0.882" stop-color="#ffd7c1"/><stop offset="0.941" stop-color="#ffcfba"/><stop offset="1.000" stop-color="#ffc8b4"/></linearGradient><linearGradient id="c14"><stop offset="0.000" stop-color="#9cffeb"/><stop offset="0.059" stop-color="#a4ffeb"/><stop offset="0.118" stop-color="#adffea"/><stop offset="0.176" stop-color="#b7ffea"/><stop offset="0.235" stop-color="#c0ffea"/><stop offset="0.294" stop-color="#c9ffea"/><stop offset="0.353" stop-color="#d3ffea"/><stop offset="0.412" stop-color="#ddffea"/><stop offset="0.471" stop-color="#e7ffe9"/><stop offset="0.529" stop-color="#f1ffe9"/><stop offset="0.588" stop-color="#fbffe9"/><stop offset="0.647" stop-color="#fff8e3"/><stop offset="0.706" stop-color="#ffefda"/><stop offset="0.765" stop-color="#ffe6d1"/><stop offset="0.824" stop-color="#ffddc9"/><stop offset="0.882" stop-color="#ffd5c2"/><stop offset="0.941" stop-color="#ffcdbb"/><stop offset="1.000" stop-color="#ffc6b4"/></linearGradient><linearGradient id="c15"><stop offset="0.000" stop-color="#9dffed"/><stop offset="0.059" stop-color="#a6ffed"/><stop offset="0.118" stop-color="#afffed"/><stop offset="0.176" stop-color="#b8ffec"/><stop offset="0.235" stop-color="#c2ffec"/><stop offset="0.294" stop-color="#cbffec"/><stop offset="0.353" stop-color="#d5ffec"/><stop offset="0.412" stop-color="#dfffec"/><stop offset="0.471" stop-color="#e9ffec"/><stop offset="0.529" stop-color="#f3ffec"/><stop offset="0.588" stop-color="#fdffeb"/><stop offset="0.647" stop-color="#fff6e3"/><stop offset="0.706" stop-color="#ffedda"/><stop offset="0.765" stop-color="#ffe4d2"/><stop offset="0.824" stop-color="#ffdbca"/><stop offset="0.882" stop-color="#ffd3c2"/><stop offset="0.941" stop-color="#ffcbbb"/><stop offset="1.000" stop-color="#ffc4b4"/></linearGradient><linearGradient id="c16"><stop offset="0.000" stop-color="#9fffef"/><stop offset="0.059" stop-color="#a8ffef"/><stop offset="0.118" stop-color="#b1ffef"/><stop offset="0.176" stop-color="#baffef"/><stop offset="0.235" stop-color="#c4ffef"/><stop offset="0.294" stop-color="#cdffee"/><stop offset="0.353" stop-color="#d7ffee"/><stop offset="0.412" stop-color="#e1ffee"/><stop offset="0.471" stop-color="#ebffee"/><stop offset="0.529" stop-color="#f5ffee"/><stop offset="0.588" stop-color="#fffeed"/><stop offset="0.647" stop-color="#fff4e4"/><stop offset="0.706" stop-color="#ffebda"/><stop offset="0.765" stop-color="#ffe2d2"/><stop offset="0.824" stop-color="#ffd9ca"/><stop offset="0.882" stop-color="#ffd1c2"/><stop offset="0.941" stop-color="#ffcabb"/><stop offset="1.000" stop-color="#ffc2b5"/></linearGradient><linearGradient id="c17"><stop offset="0.000" stop-color="#a0fff1"/><stop offset="0.059" stop-color="#a9fff1"/><stop offset="0.118" stop-color="#b3fff1"/><stop offset="0.176" stop-color="#bcfff1"/><stop offset="0.235" stop-color="#c6fff1"/><stop offset="0.294" stop-color="#cffff1"/><stop offset="0.353" stop-color="#d9fff1"/><stop offset="0.412" stop-color="#e3fff1"/><stop offset="0.471" stop-color="#edfff0"/><stop offset="0.529" stop-color="#f8fff0"/><stop offset="0.588" stop-color="#fffced"/><stop offset="0.647" stop-color="#fff2e4"/><stop offset="0.706" stop-color="#ffe8db"/><stop offset="0.765" stop-color="#ffe0d2"/><stop offset="0.824" stop-color="#ffd7ca"/><stop offset="0.882" stop-color="#ffcfc3"/><stop offset="0.941" stop-color="#ffc8bc"/><stop offset="1.000" stop-color="#ffc1b5"/></linearGradient><linearGradient id="c18"><stop offset="0.000" stop-color="#a2fff4"/><stop offset="0.059" stop-color="#abfff3"/><stop offset="0.118" stop-color="#b4fff3"/><stop offset="0.176" stop-color="#befff3"/><stop offset="0.235" stop-color="#c7fff3"/><stop offset="0.294" stop-color="#d1fff3"/><stop offset="0.353" stop-color="#dbfff3"/><stop offset="0.412" stop-color="#e5fff3"/><stop offset="0.471" stop-color="#effff3"/><stop offset="0.529" stop-color="#fafff3"/><stop offset="0.588" stop-color="#fffaee"/><stop offset="0.647" stop-color="#fff0e4"/><stop offset="0.706" stop-color="#ffe6db"/><stop offset="0.765" stop-color="#ffded3"/><stop offset="0.824" stop-color="#ffd5cb"/><stop offset="0.882" stop-color="#ffcdc3"/><stop offset="0.941" stop-color="#ffc6bc"/><stop offset="1.000" stop-color="#ffbfb5"/></linearGradient><linearGradient id="c19"><stop offset="0.000" stop-color="#a4fff6"/><stop offset="0.059" stop-color="#adfff6"/><stop offset="0.118" stop-color="#b6fff6"/><stop offset="0.176" stop-color="#c0fff6"/><stop offset="0.235" stop-color="#c9fff6"/><stop offset="0.294" stop-color="#d3fff5"/><stop offset="0.353" stop-color="#ddfff5"/><stop offset="0.412" stop-color="#e7fff5"/><stop offset="0.471" stop-color="#f2fff5"/><stop offset="0.529" stop-color="#fcfff5"/><stop offset="0.588" stop-color="#fff7ee"/><stop offset="0.647" stop-color="#ffeee4"/><stop offset="0.706" stop-color="#ffe4db"/><stop offset="0.765" stop-color="#ffdcd3"/><stop offset="0.824" stop-color="#ffd3cb"/><stop offset="0.882" stop-color="#ffccc3"/><stop offset="0.941" stop-color="#ffc4bc"/><stop offset="1.000" stop-color="#ffbdb6"/></linearGradient><linearGradient id="c20"><stop offset="0.000" stop-color="#a5fff8"/><stop offset="0.059" stop-color="#affff8"/><stop offset="0.118" stop-color="#b8fff8"/><stop offset="0.176" stop-color="#c2fff8"/><stop offset="0.235" stop-color="#cbfff8"/><stop offset="0.294" stop-color="#d5fff8"/><stop offset="0.353" stop-color="#dffff8"/><stop offset="0.412" stop-color="#e9fff8"/><stop offset="0.471" stop-color="#f4fff8"/><stop offset="0.529" stop-color="#fefff8"/><stop offset="0.588" stop-color="#fff5ee"/><stop offset="0.647" stop-color="#ffebe5"/><stop offset="0.706" stop-color="#ffe2dc"/><stop offset="0.765" stop-color="#ffdad3"/><stop offset="0.824" stop-color="#ffd1cb"/><stop offset="0.882" stop-color="#ffcac4"/><stop offset="0.941" stop-color="#ffc2bd"/><stop offset="1.000" stop-color="#ffbcb6"/></linearGradient><linearGradient id="c21"><stop offset="0.000" stop-color="#a7fffa"/><stop offset="0.059" stop-color="#b0fffa"/><stop offset="0.118" stop-color="#bafffa"/><stop offset="0.176" stop-color="#c3fffa"/><stop offset="0.235" stop-color="#cdfffa"/><stop offset="0.294" stop-color="#d7fffa"/><stop offset="0.353" stop-color="#e1fffa"/><stop offset="0.412" stop-color="#ecfffa"/><stop offset="0.471" stop-color="#f6fffa"/><stop offset="0.529" stop-color="#fffdf8"/><stop offset="0.588" stop-color="#fff3ee"/><stop offset="0.647" stop-color="#ffe9e5"/><stop offset="0.706" stop-color="#ffe0dc"/><stop offset="0.765" stop-color="#ffd8d3"/><stop offset="0.824" stop-color="#ffd0cc"/><stop offset="0.882" stop-color="#ffc8c4"/><stop offset="0.941" stop-color="#ffc1bd"/><stop offset="1.000" stop-color="#ffbab6"/></linearGradient><linearGradient id="c22"><stop offset="0.000" stop-color="#a9fffd"/><stop offset="0.059" stop-color="#b2fffd"/><stop offset="0.118" stop-color="#bcfffd"/><stop offset="0.176" stop-color="#c5fffd"/><stop offset="0.235" stop-color="#cffffd"/><stop offset="0.294" stop-color="#d9fffd"/><stop offset="0.353" stop-color="#e3fffd"/><stop offset="0.412" stop-color="#eefffd"/><stop offset="0.471" stop-color="#f8fffd"/><stop offset="0.529" stop-color="#fffbf9"/><stop offset="0.588" stop-color="#fff1ef"/><stop offset="0.647" stop-color="#ffe7e5"/><stop offset="0.706" stop-color="#ffdedc"/><stop offset="0.765" stop-color="#ffd6d4"/><stop offset="0.824" stop-color="#ffcecc"/><stop offset="0.882" stop-color="#ffc6c4"/><stop offset="0.941" stop-color="#ffbfbd"/><stop offset="1.000" stop-color="#ffb8b7"/></linearGradient><linearGradient id="c23"><stop offset="0.000" stop-color="#aaffff"/><stop offset="0.059" stop-color="#b4ffff"/><stop offset="0.118" stop-color="#bdffff"/><stop offset="0.176" stop-color="#c7ffff"/><stop offset="0.235" stop-color="#d1ffff"/><stop offset="0.294" stop-color="#dbffff"/><stop offset="0.353" stop-color="#e5ffff"/><stop offset="0.412" stop-color="#f0ffff"/><stop offset="0.471" stop-color="#fbffff"/><stop offset="0.529" stop-color="#fff9f9"/><stop offset="0.588" stop-color="#ffeeef"/><stop offset="0.647" stop-color="#ffe5e5"/><stop offset="0.706" stop-color="#ffdcdc"/><stop offset="0.765" stop-color="#ffd4d4"/><stop offset="0.824" stop-color="#ffcccc"/><stop offset="0.882" stop-color="#ffc4c5"/><stop offset="0.941" stop-color="#ffbdbe"/><stop offset="1.000" stop-color="#ffb7b7"/></linearGradient><linearGradient id="c24"><stop offset="0.000" stop-color="#abfdff"/><stop offset="0.059" stop-color="#b4fcff"/><stop offset="0.118" stop-color="#befcff"/><stop offset="0.176" stop-color="#c7fcff"/><stop offset="0.235" stop-color="#d1fcff"/><stop offset="0.294" stop-color="#dbfcff"/><stop offset="0.353" stop-color="#e5fcff"/><stop offset="0.412" stop-color="#f0fcff"/><stop offset="0.471" stop-color="#fafcff"/><stop offset="0.529" stop-color="#fff6f9"/><stop offset="0.588" stop-color="#ffecef"/><stop offset="0.647" stop-color="#ffe3e6"/><stop offset="0.706" stop-color="#ffdadd"/><stop offset="0.765" stop-color="#ffd2d4"/><stop offset="0.824" stop-color="#ffcacc"/><stop offset="0.882" stop-color="#ffc3c5"/><stop offset="0.941" stop-color="#ffbcbe"/><stop offset="1.000" stop-color="#ffb5b7"/></linearGradient><linearGradient id="c25"><stop offset="0.000" stop-color="#abfaff"/><stop offset="0.059" stop-color="#b4faff"/><stop offset="0.118" stop-color="#befaff"/><stop offset="0.176" stop-color="#c7faff"/><stop offset="0.235" stop-color="#d1faff"/><stop offset="0.294" stop-color="#dbfaff"/><stop offset="0.353" stop-color="#e5faff"/><stop offset="0.412" stop-color="#f0faff"/><stop offset="0.471" stop-color="#fafaff"/><stop offset="0.529" stop-color="#fff4f9"/><stop offset="0.588" stop-color="#ffeaef"/><stop offset="0.647" stop-color="#ffe1e6"/><stop offset="0.706" stop-color="#ffd8dd"/><stop offset="0.765" stop-color="#ffd0d5"/><stop offset="0.824" stop-color="#ffc8cd"/><stop offset="0.882" stop-color="#ffc1c5"/><stop offset="0.941" stop-color="#ffbabe"/><stop offset="1.000" stop-color="#ffb3b8"/></linearGradient><linearGradient id="c26"><stop offset="0.000" stop-color="#abf8ff"/><stop offset="0.059" stop-color="#b4f8ff"/><stop offset="0.118" stop-color="#bef8ff"/><stop offset="0.176" stop-color="#c7f8ff"/><stop offset="0.235" stop-color="#d1f8ff"/><stop offset="0.294" stop-color="#dbf7ff"/><stop offset="0.353" stop-color="#e5f7ff"/><stop offset="0.412" stop-color="#f0f7ff"/><stop offset="0.471" stop-color="#faf7ff"/><stop offset="0.529" stop-color="#fff2f9"/><stop offset="0.588" stop-color="#ffe8ef"/><stop offset="0.647" stop-color="#ffdfe6"/><stop offset="0.706" stop-color="#ffd6dd"/><stop offset="0.765" stop-color="#ffced5"/><stop offset="0.824" stop-color="#ffc6cd"/><stop offset="0.882" stop-color="#ffbfc6"/><stop offset="0.941" stop-color="#ffb8bf"/><stop offset="1.000" stop-color="#ffb2b8"/></linearGradient><linearGradient id="c27"><stop offset="0.000" stop-color="#abf6ff"/><stop offset="0.059" stop-color="#b4f5ff"/><stop offset="0.118" stop-color="#bef5ff"/><stop offset="0.176" stop-color="#c7f5ff"/><stop offset="0.235" stop-color="#d1f5ff"/><stop offset="0.294" stop-color="#dbf5ff"/><stop offset="0.353" stop-color="#e5f5ff"/><stop offset="0.412" stop-color="#eff5ff"/><stop offset="0.471" stop-color="#faf5ff"/><stop offset="0.529" stop-color="#ffeffa"/><stop offset="0.588" stop-color="#ffe6f0"/><stop offset="0.647" stop-color="#ffdde6"/><stop offset="0.706" stop-color="#ffd4dd"/><stop offset="0.765" stop-color="#ffccd5"/><stop offset="0.824" stop-color="#ffc4cd"/><stop offset="0.882" stop-color="#ffbdc6"/><stop offset="0.941" stop-color="#ffb6bf"/><stop offset="1.000" stop-color="#ffb0b8"/></linearGradient><linearGradient id="c28"><stop offset="0.000" stop-color="#abf3ff"/><stop offset="0.059" stop-color="#b4f3ff"/><stop offset="0.118" stop-color="#bef3ff"/><stop offset="0.176" stop-color="#c7f3ff"/><stop offset="0.235" stop-color="#d1f3ff"/><stop offset="0.294" stop-color="#dbf3ff"/><stop offset="0.353" stop-color="#e5f3ff"/><stop offset="0.412" stop-color="#eff2ff"/><stop offset="0.471" stop-color="#faf2ff"/><stop offset="0.529" stop-color="#ffedfa"/><stop offset="0.588" stop-color="#ffe4f0"/><stop offset="0.647" stop-color="#ffdbe7"/><stop offset="0.706" stop-color="#ffd2de"/><stop offset="0.765" stop-color="#ffcad5"/><stop offset="0.824" stop-color="#ffc3ce"/><stop offset="0.882" stop-color="#ffbcc6"/><stop offset="0.941" stop-color="#ffb5bf"/><stop offset="1.000" stop-color="#ffaeb9"/></linearGradient><linearGradient id="c29"><stop offset="0.000" stop-color="#abf1ff"/><stop offset="0.059" stop-color="#b5f1ff"/><stop offset="0.118" stop-color="#bef1ff"/><stop offset="0.176" stop-color="#c7f1ff"/><stop offset="0.235" stop-color="#d1f0ff"/><stop offset="0.294" stop-color="#dbf0ff"/><stop offset="0.353" stop-color="#e5f0ff"/><stop offset="0.412" stop-color="#eff0ff"/><stop offset="0.471" stop-color="#faf0ff"/><stop offset="0.529" stop-color="#ffebfa"/><stop offset="0.588" stop-color="#ffe1f0"/><stop offset="0.647" stop-color="#ffd9e7"/><stop offset="0.706" stop-color="#ffd0de"/><stop offset="0.765" stop-color="#ffc8d6"/><stop offset="0.824" stop-color="#ffc1ce"/><stop offset="0.882" stop-color="#ffbac7"/><stop offset="0.941" stop-color="#ffb3c0"/><stop offset="1.000" stop-color="#ffadb9"/></linearGradient><linearGradient id="c30"><stop offset="0.000" stop-color="#abefff"/><stop offset="0.059" stop-color="#b5efff"/><stop offset="0.118" stop-color="#beeeff"/><stop offset="0.176" stop-color="#c7eeff"/><stop offset="0.235" stop-color="#d1eeff"/><stop offset="0.294" stop-color="#dbeeff"/><stop offset="0.353" stop-color="#e5eeff"/><stop offset="0.412" stop-color="#efeeff"/><stop offset="0.471" stop-color="#f9edff"/><stop offset="0.529" stop-color="#ffe9fa"/><stop offset="0.588" stop-color="#ffdff0"/><stop offset="0.647" stop-color="#ffd7e7"/><stop offset="0.706" stop-color="#ffcede"/><stop offset="0.765" stop-color="#ffc6d6"/><stop offset="0.824" stop-color="#ffbfce"/><stop offset="0.882" stop-color="#ffb8c7"/><stop offset="0.941" stop-color="#ffb1c0"/><stop offset="1.000" stop-color="#ffabb9"/></linearGradient><linearGradient id="c31"><stop offset="0.000" stop-color="#acecff"/><stop offset="0.059" stop-color="#b5ecff"/><stop offset="0.118" stop-color="#beecff"/><stop offset="0.176" stop-color="#c8ecff"/><stop offset="0.235" stop-color="#d1ecff"/><stop offset="0.294" stop-color="#dbecff"/><stop offset="0.353" stop-color="#e5ebff"/><stop offset="0.412" stop-color="#efebff"/><stop offset="0.471" stop-color="#f9ebff"/><stop offset="0.529" stop-color="#ffe7fa"/><stop offset="0.588" stop-color="#ffddf1"/><stop offset="0.647" stop-color="#ffd5e7"/><stop offset="0.706" stop-color="#ffccdf"/><stop offset="0.765" stop-color="#ffc5d6"/><stop offset="0.824" stop-color="#ffbdce"/><stop offset="0.882" stop-color="#ffb6c7"/><stop offset="0.941" stop-color="#ffb0c0"/><stop offset="1.000" stop-color="#ffaaba"/></linearGradient><linearGradient id="c32"><stop offset="0.000" stop-color="#aceaff"/><stop offset="0.059" stop-color="#b5eaff"/><stop offset="0.118" stop-color="#beeaff"/><stop offset="0.176" stop-color="#c8eaff"/><stop offset="0.235" stop-color="#d1e9ff"/><stop offset="0.294" stop-color="#dbe9ff"/><stop offset="0.353" stop-color="#e5e9ff"/><stop offset="0.412" stop-color="#efe9ff"/><stop offset="0.471" stop-color="#f9e9ff"/><stop offset="0.529" stop-color="#ffe4fb"/><stop offset="0.588" stop-color="#ffdbf1"/><stop offset="0.647" stop-color="#ffd3e7"/><stop offset="0.706" stop-color="#ffcadf"/><stop offset="0.765" stop-color="#ffc3d7"/><stop offset="0.824" stop-color="#ffbccf"/><stop offset="0.882" stop-color="#ffb5c7"/><stop offset="0.941" stop-color="#ffaec0"/><stop offset="1.000" stop-color="#ffa8ba"/></linearGradient><linearGradient id="c33"><stop offset="0.000" stop-color="#ace8ff"/><stop offset="0.059" stop-color="#b5e8ff"/><stop offset="0.118" stop-color="#bee8ff"/><stop offset="0.176" stop-color="#c8e7ff"/><stop offset="0.235" stop-color="#d1e7ff"/><stop offset="0.294" stop-color="#dbe7ff"/><stop offset="0.353" stop-color="#e5e7ff"/><stop offset="0.412" stop-color="#efe6ff"/><stop offset="0.471" stop-color="#f9e6ff"/><stop offset="0.529" stop-color="#ffe2fb"/><stop offset="0.588" stop-color="#ffd9f1"/><stop offset="0.647" stop-color="#ffd1e8"/><stop offset="0.706" stop-color="#ffc9df"/><stop offset="0.765" stop-color="#ffc1d7"/><stop offset="0.824" stop-color="#ffbacf"/><stop offset="0.882" stop-color="#ffb3c8"/><stop offset="0.941" stop-color="#ffadc1"/><stop offset="1.000" stop-color="#ffa6ba"/></linearGradient><linearGradient id="c34"><stop offset="0.000" stop-color="#ace6ff"/><stop offset="0.059" stop-color="#b5e6ff"/><stop offset="0.118" stop-color="#bee5ff"/><stop offset="0.176" stop-color="#c8e5ff"/><stop offset="0.235" stop-color="#d1e5ff"/><stop offset="0.294" stop-color="#dbe5ff"/><stop offset="0.353" stop-color="#e5e4ff"/><stop offset="0.412" stop-color="#efe4ff"/><stop offset="0.471" stop-color="#f9e4ff"/><stop offset="0.529" stop-color="#ffe0fb"/><stop offset="0.588" stop-color="#ffd7f1"/><stop offset="0.647" stop-color="#ffcfe8"/><stop offset="0.706" stop-color="#ffc7df"/><stop offset="0.765" stop-color="#ffbfd7"/><stop offset="0.824" stop-color="#ffb8cf"/><stop offset="0.882" stop-color="#ffb1c8"/><stop offset="0.941" stop-color="#ffabc1"/><stop offset="1.000" stop-color="#ffa5ba"/></linearGradient><linearGradient id="c35"><stop offset="0.000" stop-color="#ace4ff"/><stop offset="0.059" stop-color="#b5e3ff"/><stop offset="0.118" stop-color="#bee3ff"/><stop offset="0.176" stop-color="#c8e3ff"/><stop offset="0.235" stop-color="#d1e3ff"/><stop offset="0.294" stop-color="#dbe2ff"/><stop offset="0.353" stop-color="#e5e2ff"/><stop offset="0.412" stop-color="#efe2ff"/><stop offset="0.471" stop-color="#f9e2ff"/><stop offset="0.529" stop-color="#ffdefb"/><stop offset="0.588" stop-color="#ffd5f1"/><stop offset="0.647" stop-color="#ffcde8"/><stop offset="0.706" stop-color="#ffc5e0"/><stop offset="0.765" stop-color="#ffbdd7"/><stop offset="0.824" stop-color="#ffb6d0"/><stop offset="0.882" stop-color="#ffb0c8"/><stop offset="0.941" stop-color="#ffa9c1"/><stop offset="1.000" stop-color="#ffa3bb"/></linearGradient><linearGradient id="c36"><stop offset="0.000" stop-color="#ace1ff"/><stop offset="0.059" stop-color="#b5e1ff"/><stop offset="0.118" stop-color="#bee1ff"/><stop offset="0.176" stop-color="#c8e1ff"/><stop offset="0.235" stop-color="#d1e0ff"/><stop offset="0.294" stop-color="#dbe0ff"/><stop offset="0.353" stop-color="#e4e0ff"/><stop offset="0.412" stop-color="#eee0ff"/><stop offset="0.471" stop-color="#f8dfff"/><stop offset="0.529" stop-color="#ffdcfb"/><stop offset="0.588" stop-color="#ffd3f2"/><stop offset="0.647" stop-color="#ffcbe8"/><stop offset="0.706" stop-color="#ffc3e0"/><stop offset="0.765" stop-color="#ffbcd8"/><stop offset="0.824" stop-color="#ffb5d0"/><stop offset="0.882" stop-color="#ffaec9"/><stop offset="0.941" stop-color="#ffa8c2"/><stop offset="1.000" stop-color="#ffa2bb"/></linearGradient><linearGradient id="c37"><stop offset="0.000" stop-color="#acdfff"/><stop offset="0.059" stop-color="#b5dfff"/><stop offset="0.118" stop-color="#bedfff"/><stop offset="0.176" stop-color="#c8deff"/><stop offset="0.235" stop-color="#d1deff"/><stop offset="0.294" stop-color="#dbdeff"/><stop offset="0.353" stop-color="#e4deff"/><stop offset="0.412" stop-color="#eeddff"/><stop offset="0.471" stop-color="#f8ddff"/><stop offset="0.529" stop-color="#ffdafb"/><stop offset="0.588" stop-color="#ffd1f2"/><stop offset="0.647" stop-color="#ffc9e9"/><stop offset="0.706" stop-color="#ffc1e0"/><stop offset="0.765" stop-color="#ffbad8"/><stop offset="0.824" stop-color="#ffb3d0"/><stop offset="0.882" stop-color="#ffacc9"/><stop offset="0.941" stop-color="#ffa6c2"/><stop offset="1.000" stop-color="#ffa0bb"/></linearGradient><linearGradient id="c38"><stop offset="0.000" stop-color="#adddff"/><stop offset="0.059" stop-color="#b5ddff"/><stop offset="0.118" stop-color="#bfddff"/><stop offset="0.176" stop-color="#c8dcff"/><stop offset="0.235" stop-color="#d1dcff"/><stop offset="0.294" stop-color="#dbdcff"/><stop offset="0.353" stop-color="#e4dbff"/><stop offset="0.412" stop-color="#eedbff"/><stop offset="0.471" stop-color="#f8dbff"/><stop offset="0.529" stop-color="#ffd8fc"/><stop offset="0.588" stop-color="#ffcff2"/><stop offset="0.647" stop-color="#ffc7e9"/><stop offset="0.706" stop-color="#ffbfe0"/><stop offset="0.765" stop-color="#ffb8d8"/><stop offset="0.824" stop-color="#ffb1d0"/><stop offset="0.882" stop-color="#ffabc9"/><stop offset="0.941" stop-color="#ffa5c2"/><stop offset="1.000" stop-color="#ff9fbc"/></linearGradient><linearGradient id="c39"><stop offset="0.000" stop-color="#addbff"/><stop offset="0.059" stop-color="#b6dbff"/><stop offset="0.118" stop-color="#bfdaff"/><stop offset="0.176" stop-color="#c8daff"/><stop offset="0.235" stop-color="#d1daff"/><stop offset="0.294" stop-color="#dbd9ff"/><stop offset="0.353" stop-color="#e4d9ff"/><stop offset="0.412" stop-color="#eed9ff"/><stop offset="0.471" stop-color="#f8d8ff"/><stop offset="0.529" stop-color="#ffd5fc"/><stop offset="0.588" stop-color="#ffcdf2"/><stop offset="0.647" stop-color="#ffc5e9"/><stop offset="0.706" stop-color="#ffbde1"/><stop offset="0.765" stop-color="#ffb6d8"/><stop offset="0.824" stop-color="#ffafd1"/><stop offset="0.882" stop-color="#ffa9c9"/><stop offset="0.941" stop-color="#ffa3c3"/><stop offset="1.000" stop-color="#ff9dbc"/></linearGradient><linearGradient id="c40"><stop offset="0.000" stop-color="#add9ff"/><stop offset="0.059" stop-color="#b6d9ff"/><stop offset="0.118" stop-color="#bfd8ff"/><stop offset="0.176" stop-color="#c8d8ff"/><stop offset="0.235" stop-color="#d1d8ff"/><stop offset="0.294" stop-color="#dbd7ff"/><stop offset="0.353" stop-color="#e4d7ff"/><stop offset="0.412" stop-color="#eed7ff"/><stop offset="0.471" stop-color="#f8d6ff"/><stop offset="0.529" stop-color="#ffd3fc"/><stop offset="0.588" stop-color="#ffcbf2"/><stop offset="0.647" stop-color="#ffc3e9"/><stop offset="0.706" stop-color="#ffbce1"/><stop offset="0.765" stop-color="#ffb4d9"/><stop offset="0.824" stop-color="#ffaed1"/><stop offset="0.882" stop-color="#ffa7ca"/><stop offset="0.941" stop-color="#ffa1c3"/><stop offset="1.000" stop-color="#ff9cbc"/></linearGradient><linearGradient id="c41"><stop offset="0.000" stop-color="#add7ff"/><stop offset="0.059" stop-color="#b6d6ff"/><stop offset="0.118" stop-color="#bfd6ff"/><stop offset="0.176" stop-color="#c8d6ff"/><stop offset="0.235" stop-color="#d1d5ff"/><stop offset="0.294" stop-color="#dbd5ff"/><stop offset="0.353" stop-color="#e4d5ff"/><stop offset="0.412" stop-color="#eed4ff"/><stop offset="0.471" stop-color="#f8d4ff"/><stop offset="0.529" stop-color="#ffd1fc"/><stop offset="0.588" stop-color="#ffc9f3"/><stop offset="0.647" stop-color="#ffc1ea"/><stop offset="0.706" stop-color="#ffbae1"/><stop offset="0.765" stop-color="#ffb3d9"/><stop offset="0.824" stop-color="#ffacd1"/><stop offset="0.882" stop-color="#ffa6ca"/><stop offset="0.941" stop-color="#ffa0c3"/><stop offset="1.000" stop-color="#ff9abd"/></linearGradient><linearGradient id="c42"><stop offset="0.000" stop-color="#add5ff"/><stop offset="0.059" stop-color="#b6d4ff"/><stop offset="0.118" stop-color="#bfd4ff"/><stop offset="0.176" stop-color="#c8d4ff"/><stop offset="0.235" stop-color="#d1d3ff"/><stop offset="0.294" stop-color="#dbd3ff"/><stop offset="0.353" stop-color="#e4d3ff"/><stop offset="0.412" stop-color="#eed2ff"/><stop offset="0.471" stop-color="#f8d2ff"/><stop offset="0.529" stop-color="#ffcffc"/><stop offset="0.588" stop-color="#ffc7f3"/><stop offset="0.647" stop-color="#ffbfea"/><stop offset="0.706" stop-color="#ffb8e1"/><stop offset="0.765" stop-color="#ffb1d9"/><stop offset="0.824" stop-color="#ffaad2"/><stop offset="0.882" stop-color="#ffa4ca"/><stop offset="0.941" stop-color="#ff9ec3"/><stop offset="1.000" stop-color="#ff99bd"/></linearGradient><linearGradient id="c43"><stop offset="0.000" stop-color="#add3ff"/><stop offset="0.059" stop-color="#b6d2ff"/><stop offset="0.118" stop-color="#bfd2ff"/><stop offset="0.176" stop-color="#c8d2ff"/><stop offset="0.235" stop-color="#d1d1ff"/><stop offset="0.294" stop-color="#dbd1ff"/><stop offset="0.353" stop-color="#e4d0ff"/><stop offset="0.412" stop-color="#eed0ff"/><stop offset="0.471" stop-color="#f7d0ff"/><stop offset="0.529" stop-color="#ffcdfd"/><stop offset="0.588" stop-color="#ffc5f3"/><stop offset="0.647" stop-color="#ffbdea"/><stop offset="0.706" stop-color="#ffb6e1"/><stop offset="0.765" stop-color="#ffafd9"/><stop offset="0.824" stop-color="#ffa9d2"/><stop offset="0.882" stop-color="#ffa3cb"/><stop offset="0.941" stop-color="#ff9dc4"/><stop offset="1.000" stop-color="#ff97bd"/></linearGradient><linearGradient id="c44"><stop offset="0.000" stop-color="#add1ff"/><stop offset="0.059" stop-color="#b6d0ff"/><stop offset="0.118" stop-color="#bfd0ff"/><stop offset="0.176" stop-color="#c8cfff"/><stop offset="0.235" stop-color="#d1cfff"/><stop offset="0.294" stop-color="#dacfff"/><stop offset="0.353" stop-color="#e4ceff"/><stop offset="0.412" stop-color="#eeceff"/><stop offset="0.471" stop-color="#f7cdff"/><stop offset="0.529" stop-color="#ffcbfd"/><stop offset="0.588" stop-color="#ffc3f3"/><stop offset="0.647" stop-color="#ffbbea"/><stop offset="0.706" stop-color="#ffb4e2"/><stop offset="0.765" stop-color="#ffadda"/><stop offset="0.824" stop-color="#ffa7d2"/><stop offset="0.882" stop-color="#ffa1cb"/><stop offset="0.941" stop-color="#ff9bc4"/><stop offset="1.000" stop-color="#ff96be"/></linearGradient><linearGradient id="c45"><stop offset="0.000" stop-color="#adcfff"/><stop offset="0.059" stop-color="#b6ceff"/><stop offset="0.118" stop-color="#bfceff"/><stop offset="0.176" stop-color="#c8cdff"/><stop offset="0.235" stop-color="#d1cdff"/><stop offset="0.294" stop-color="#dacdff"/><stop offset="0.353" stop-color="#e4ccff"/><stop offset="0.412" stop-color="#edccff"/><stop offset="0.471" stop-color="#f7cbff"/><stop offset="0.529" stop-color="#ffc9fd"/><stop offset="0.588" stop-color="#ffc1f3"/><stop offset="0.647" stop-color="#ffbaea"/><stop offset="0.706" stop-color="#ffb3e2"/><stop offset="0.765" stop-color="#ffacda"/><stop offset="0.824" stop-color="#ffa5d2"/><stop offset="0.882" stop-color="#ff9fcb"/><stop offset="0.941" stop-color="#ff9ac4"/><stop offset="1.000" stop-color="#ff94be"/></linearGradient><linearGradient id="c46"><stop offset="0.000" stop-color="#aecdff"/><stop offset="0.059" stop-color="#b6ccff"/><stop offset="0.118" stop-color="#bfccff"/><stop offset="0.176" stop-color="#c8cbff"/><stop offset="0.235" stop-color="#d1cbff"/><stop offset="0.294" stop-color="#dacaff"/><stop offset="0.353" stop-color="#e4caff"/><stop offset="0.412" stop-color="#edcaff"/><stop offset="0.471" stop-color="#f7c9ff"/><stop offset="0.529" stop-color="#ffc7fd"/><stop offset="0.588" stop-color="#ffbff4"/><stop offset="0.647" stop-color="#ffb8eb"/><stop offset="0.706" stop-color="#ffb1e2"/><stop offset="0.765" stop-color="#ffaada"/><stop offset="0.824" stop-color="#ffa4d3"/><stop offset="0.882" stop-color="#ff9ecb"/><stop offset="0.941" stop-color="#ff98c5"/><stop offset="1.000" stop-color="#ff93be"/></linearGradient></defs>
<rect x="380.5" y="663.0" width="245.0" height="4.6" fill="url(#c0)"/>
<rect x="380.5" y="667.0" width="245.0" height="4.6" fill="url(#c1)"/>
<rect x="380.5" y="671.0" width="245.0" height="4.6" fill="url(#c2)"/>
<rect x="380.5" y="675.0" width="245.0" height="4.6" fill="url(#c3)"/>
<rect x="380.5" y="679.0" width="245.0" height="4.6" fill="url(#c4)"/>
<rect x="380.5" y="683.0" width="245.0" height="4.6" fill="url(#c5)"/>
<rect x="380.5" y="687.0" width="245.0" height="4.6" fill="url(#c6)"/>
<rect x="380.5" y="691.0" width="245.0" height="4.6" fill="url(#c7)"/>
<rect x="380.5" y="695.0" width="245.0" height="4.6" fill="url(#c8)"/>
<rect x="380.5" y="699.0" width="245.0" height="4.6" fill="url(#c9)"/>
<rect x="380.5" y="703.0" width="245.0" height="4.6" fill="url(#c10)"/>
<rect x="380.5" y="707.0" width="245.0" height="4.6" fill="url(#c11)"/>
<rect x="380.5" y="711.0" width="245.0" height="4.6" fill="url(#c12)"/>
<rect x="380.5" y="715.0" width="245.0" height="4.6" fill="url(#c13)"/>
<rect x="380.5" y="719.0" width="245.0" height="4.6" fill="url(#c14)"/>
<rect x="380.5" y="723.0" width="245.0" height="4.6" fill="url(#c15)"/>
<rect x="380.5" y="727.0" width="245.0" height="4.6" fill="url(#c16)"/>
<rect x="380.5" y="731.0" width="245.0" height="4.6" fill="url(#c17)"/>
<rect x="380.5" y="735.0" width="245.0" height="4.6" fill="url(#c18)"/>
<rect x="380.5" y="739.0" width="245.0" height="4.6" fill="url(#c19)"/>
<rect x="380.5" y="743.0" width="245.0" height="4.6" fill="url(#c20)"/>
<rect x="380.5" y="747.0" width="245.0" height="4.6" fill="url(#c21)"/>
<rect x="380.5" y="751.0" width="245.0" height="4.6" fill="url(#c22)"/>
<rect x="380.5" y="755.0" width="245.0" height="4.6" fill="url(#c23)"/>
<rect x="380.5" y="759.0" width="245.0" height="4.6" fill="url(#c24)"/>
<rect x="380.5" y="763.0" width="245.0" height="4.6" fill="url(#c25)"/>
<rect x="380.5" y="767.0" width="245.0" height="4.6" fill="url(#c26)"/>
<rect x="380.5" y="771.0" width="245.0" height="4.6" fill="url(#c27)"/>
<rect x="380.5" y="775.0" width="245.0" height="4.6" fill="url(#c28)"/>
<rect x="380.5" y="779.0" width="245.0" height="4.6" fill="url(#c29)"/>
<rect x="380.5" y="783.0" width="245.0" height="4.6" fill="url(#c30)"/>
<rect x="380.5" y="787.0" width="245.0" height="4.6" fill="url(#c31)"/>
<rect x="380.5" y="791.0" width="245.0" height="4.6" fill="url(#c32)"/>
<rect x="380.5" y="795.0" width="245.0" height="4.6" fill="url(#c33)"/>
<rect x="380.5" y="799.0" width="245.0" height="4.6" fill="url(#c34)"/>
<rect x="380.5" y="803.0" width="245.0" height="4.6" fill="url(#c35)"/>
<rect x="380.5" y="807.0" width="245.0" height="4.6" fill="url(#c36)"/>
<rect x="380.5" y="811.0" width="245.0" height="4.6" fill="url(#c37)"/>
<rect x="380.5" y="815.0" width="245.0" height="4.6" fill="url(#c38)"/>
<rect x="380.5" y="819.0" width="245.0" height="4.6" fill="url(#c39)"/>
<rect x="380.5" y="823.0" width="245.0" height="4.6" fill="url(#c40)"/>
<rect x="380.5" y="827.0" width="245.0" height="4.6" fill="url(#c41)"/>
<rect x="380.5" y="831.0" width="245.0" height="4.6" fill="url(#c42)"/>
<rect x="380.5" y="835.0" width="245.0" height="4.6" fill="url(#c43)"/>
<rect x="380.5" y="839.0" width="245.0" height="4.6" fill="url(#c44)"/>
<rect x="380.5" y="843.0" width="245.0" height="4.6" fill="url(#c45)"/>
<rect x="380.5" y="847.0" width="245.0" height="4.6" fill="url(#c46)"/>
<polyline points="405.0,855.9 412.8,849.2 420.7,842.6 428.5,836.1 436.3,829.7 444.1,823.3 452.0,816.9 459.8,810.7 467.6,804.5 475.4,798.3 483.3,792.3 491.1,786.3 498.9,780.4 506.8,774.5 514.6,768.7 522.4,763.0 530.2,757.3 538.1,751.7 545.9,746.2 553.7,740.8 561.6,735.4 569.4,730.1 577.2,724.8 585.0,719.6 592.9,714.5 600.7,709.4 608.5,704.5 616.3,699.5 624.2,694.7 632.0,689.9" fill="none" stroke="#0a0a0a" stroke-width="2.7"/>
</g>
<rect x="380.50" y="663.00" width="245.00" height="187.50" fill="none" stroke="#a8a8a8" stroke-width="1.2"/>
<circle cx="532.0" cy="702.9" r="4.6" fill="#1c1c1c" stroke="#1c1c1c" stroke-width="0.5"/>
<rect x="496.10" y="749.10" width="12.70" height="14.70" fill="none" stroke="#000" stroke-width="2"/>
<circle cx="503.9" cy="750.2" r="3.9" fill="#9a9a9a" stroke="#2a2a2a" stroke-width="1.3"/>
<circle cx="507.2" cy="743.4" r="3.9" fill="#7c7c7c" stroke="#2a2a2a" stroke-width="1.3"/>
<circle cx="515.1" cy="734.6" r="4.2" fill="#383838" stroke="#1c1c1c" stroke-width="1.0"/>
<circle cx="514.1" cy="741.5" r="3.9" fill="#c6c6c6" stroke="#2a2a2a" stroke-width="1.3"/>
<circle cx="507.2" cy="747.5" r="3.9" fill="#dedede" stroke="#2a2a2a" stroke-width="1.3"/>
<circle cx="500.9" cy="759.4" r="3.8" fill="#ffffff" stroke="#0a0a0a" stroke-width="1.3"/>
<line x1="374.80" y1="677.80" x2="380.50" y2="677.80" stroke="#d6d6d6" stroke-width="1.6"/>
<text x="373.6" y="683.4" font-size="15.5" text-anchor="end" fill="#dcdcdc" font-weight="normal" textLength="29.0" lengthAdjust="spacingAndGlyphs">0,35</text>
<line x1="374.80" y1="716.70" x2="380.50" y2="716.70" stroke="#d6d6d6" stroke-width="1.6"/>
<text x="373.6" y="722.3" font-size="15.5" text-anchor="end" fill="#dcdcdc" font-weight="normal" textLength="29.0" lengthAdjust="spacingAndGlyphs">0,34</text>
<line x1="374.80" y1="753.60" x2="380.50" y2="753.60" stroke="#d6d6d6" stroke-width="1.6"/>
<text x="373.6" y="759.2" font-size="15.5" text-anchor="end" fill="#dcdcdc" font-weight="normal" textLength="29.0" lengthAdjust="spacingAndGlyphs">0,33</text>
<line x1="374.80" y1="790.40" x2="380.50" y2="790.40" stroke="#d6d6d6" stroke-width="1.6"/>
<text x="373.6" y="796.0" font-size="15.5" text-anchor="end" fill="#dcdcdc" font-weight="normal" textLength="29.0" lengthAdjust="spacingAndGlyphs">0,32</text>
<line x1="374.80" y1="827.80" x2="380.50" y2="827.80" stroke="#d6d6d6" stroke-width="1.6"/>
<text x="373.6" y="833.4" font-size="15.5" text-anchor="end" fill="#dcdcdc" font-weight="normal" textLength="29.0" lengthAdjust="spacingAndGlyphs">0,31</text>
<line x1="390.50" y1="850.50" x2="390.50" y2="856.50" stroke="#d6d6d6" stroke-width="1.6"/>
<text x="390.5" y="874.4" font-size="15.5" text-anchor="middle" fill="#dcdcdc" font-weight="normal" textLength="29.5" lengthAdjust="spacingAndGlyphs">0,29</text>
<line x1="439.50" y1="850.50" x2="439.50" y2="856.50" stroke="#d6d6d6" stroke-width="1.6"/>
<text x="439.5" y="874.4" font-size="15.5" text-anchor="middle" fill="#dcdcdc" font-weight="normal" textLength="21.5" lengthAdjust="spacingAndGlyphs">0,3</text>
<line x1="488.40" y1="850.50" x2="488.40" y2="856.50" stroke="#d6d6d6" stroke-width="1.6"/>
<text x="488.4" y="874.4" font-size="15.5" text-anchor="middle" fill="#dcdcdc" font-weight="normal" textLength="29.5" lengthAdjust="spacingAndGlyphs">0,31</text>
<line x1="537.60" y1="850.50" x2="537.60" y2="856.50" stroke="#d6d6d6" stroke-width="1.6"/>
<text x="537.6" y="874.4" font-size="15.5" text-anchor="middle" fill="#dcdcdc" font-weight="normal" textLength="29.5" lengthAdjust="spacingAndGlyphs">0,32</text>
<line x1="586.40" y1="850.50" x2="586.40" y2="856.50" stroke="#d6d6d6" stroke-width="1.6"/>
<text x="586.4" y="874.4" font-size="15.5" text-anchor="middle" fill="#dcdcdc" font-weight="normal" textLength="29.5" lengthAdjust="spacingAndGlyphs">0,33</text>
<rect x="636.80" y="653.00" width="13.00" height="30.40" fill="#000"/>
<rect x="649.70" y="653.00" width="793.20" height="30.40" fill="url(#hdr)"/>
<rect x="649.70" y="683.40" width="793.20" height="28.50" fill="#3f3f3f"/>
<rect x="636.80" y="683.40" width="12.90" height="28.50" fill="#2b2b2b"/>
<rect x="649.70" y="711.90" width="793.20" height="28.10" fill="#7c7c7c"/>
<rect x="636.80" y="711.90" width="12.90" height="28.10" fill="#303030"/>
<rect x="649.70" y="740.00" width="793.20" height="27.80" fill="#3f3f3f"/>
<rect x="636.80" y="740.00" width="12.90" height="27.80" fill="#2b2b2b"/>
<rect x="649.70" y="767.80" width="793.20" height="28.30" fill="#7c7c7c"/>
<rect x="636.80" y="767.80" width="12.90" height="28.30" fill="#303030"/>
<rect x="649.70" y="796.10" width="793.20" height="28.30" fill="#3f3f3f"/>
<rect x="636.80" y="796.10" width="12.90" height="28.30" fill="#2b2b2b"/>
<rect x="649.70" y="824.40" width="793.20" height="28.60" fill="#7c7c7c"/>
<rect x="636.80" y="824.40" width="12.90" height="28.60" fill="#303030"/>
<rect x="649.70" y="853.00" width="793.20" height="28.00" fill="#3f3f3f"/>
<rect x="636.80" y="853.00" width="12.90" height="28.00" fill="#2b2b2b"/>
<text x="774.6" y="675.7" font-size="16.5" text-anchor="start" fill="#f0f0f0" font-weight="normal" textLength="7.6" lengthAdjust="spacingAndGlyphs">0</text>
<text x="835.7" y="675.7" font-size="16.5" text-anchor="start" fill="#f0f0f0" font-weight="normal" textLength="15.2" lengthAdjust="spacingAndGlyphs">10</text>
<text x="896.8" y="675.7" font-size="16.5" text-anchor="start" fill="#f0f0f0" font-weight="normal" textLength="15.2" lengthAdjust="spacingAndGlyphs">20</text>
<text x="957.9" y="675.7" font-size="16.5" text-anchor="start" fill="#f0f0f0" font-weight="normal" textLength="15.2" lengthAdjust="spacingAndGlyphs">30</text>
<text x="1019.0" y="675.7" font-size="16.5" text-anchor="start" fill="#f0f0f0" font-weight="normal" textLength="15.2" lengthAdjust="spacingAndGlyphs">40</text>
<text x="1080.1" y="675.7" font-size="16.5" text-anchor="start" fill="#f0f0f0" font-weight="normal" textLength="15.2" lengthAdjust="spacingAndGlyphs">50</text>
<text x="1141.2" y="675.7" font-size="16.5" text-anchor="start" fill="#f0f0f0" font-weight="normal" textLength="15.2" lengthAdjust="spacingAndGlyphs">60</text>
<text x="1202.3" y="675.7" font-size="16.5" text-anchor="start" fill="#f0f0f0" font-weight="normal" textLength="15.2" lengthAdjust="spacingAndGlyphs">70</text>
<text x="1263.4" y="675.7" font-size="16.5" text-anchor="start" fill="#f0f0f0" font-weight="normal" textLength="15.2" lengthAdjust="spacingAndGlyphs">80</text>
<text x="1324.5" y="675.7" font-size="16.5" text-anchor="start" fill="#f0f0f0" font-weight="normal" textLength="15.2" lengthAdjust="spacingAndGlyphs">90</text>
<text x="1385.6" y="675.7" font-size="16.5" text-anchor="start" fill="#f0f0f0" font-weight="normal" textLength="22.8" lengthAdjust="spacingAndGlyphs">100</text>
<text x="654.0" y="705.2" font-size="19" text-anchor="start" fill="#f0f0f0" font-weight="normal" textLength="50.5" lengthAdjust="spacingAndGlyphs">x: CIE31</text>
<text x="774.6" y="705.2" font-size="19" text-anchor="start" fill="#f0f0f0" font-weight="normal" textLength="27.6" lengthAdjust="spacingAndGlyphs">0,29</text>
<text x="835.7" y="705.2" font-size="19" text-anchor="start" fill="#f0f0f0" font-weight="normal" textLength="27.6" lengthAdjust="spacingAndGlyphs">0,32</text>
<text x="896.8" y="705.2" font-size="19" text-anchor="start" fill="#f0f0f0" font-weight="normal" textLength="27.6" lengthAdjust="spacingAndGlyphs">0,32</text>
<text x="957.9" y="705.2" font-size="19" text-anchor="start" fill="#f0f0f0" font-weight="normal" textLength="27.6" lengthAdjust="spacingAndGlyphs">0,31</text>
<text x="1019.0" y="705.2" font-size="19" text-anchor="start" fill="#f0f0f0" font-weight="normal" textLength="27.6" lengthAdjust="spacingAndGlyphs">0,31</text>
<text x="1080.1" y="705.2" font-size="19" text-anchor="start" fill="#f0f0f0" font-weight="normal" textLength="27.6" lengthAdjust="spacingAndGlyphs">0,31</text>
<text x="1141.2" y="705.2" font-size="19" text-anchor="start" fill="#f0f0f0" font-weight="normal" textLength="27.6" lengthAdjust="spacingAndGlyphs">0,31</text>
<text x="1202.3" y="705.2" font-size="19" text-anchor="start" fill="#f0f0f0" font-weight="normal" textLength="27.6" lengthAdjust="spacingAndGlyphs">0,31</text>
<text x="1263.4" y="705.2" font-size="19" text-anchor="start" fill="#f0f0f0" font-weight="normal" textLength="27.6" lengthAdjust="spacingAndGlyphs">0,31</text>
<text x="1324.5" y="705.2" font-size="19" text-anchor="start" fill="#f0f0f0" font-weight="normal" textLength="27.6" lengthAdjust="spacingAndGlyphs">0,31</text>
<text x="1385.6" y="705.2" font-size="19" text-anchor="start" fill="#f0f0f0" font-weight="normal" textLength="27.6" lengthAdjust="spacingAndGlyphs">0,31</text>
<text x="654.0" y="733.2" font-size="19" text-anchor="start" fill="#ededed" font-weight="normal" textLength="50.5" lengthAdjust="spacingAndGlyphs">y: CIE31</text>
<text x="774.6" y="733.2" font-size="19" text-anchor="start" fill="#ededed" font-weight="normal" textLength="27.6" lengthAdjust="spacingAndGlyphs">0,30</text>
<text x="835.7" y="733.2" font-size="19" text-anchor="start" fill="#ededed" font-weight="normal" textLength="27.6" lengthAdjust="spacingAndGlyphs">0,34</text>
<text x="896.8" y="733.2" font-size="19" text-anchor="start" fill="#ededed" font-weight="normal" textLength="27.6" lengthAdjust="spacingAndGlyphs">0,33</text>
<text x="957.9" y="733.2" font-size="19" text-anchor="start" fill="#ededed" font-weight="normal" textLength="27.6" lengthAdjust="spacingAndGlyphs">0,33</text>
<text x="1019.0" y="733.2" font-size="19" text-anchor="start" fill="#ededed" font-weight="normal" textLength="27.6" lengthAdjust="spacingAndGlyphs">0,33</text>
<text x="1080.1" y="733.2" font-size="19" text-anchor="start" fill="#ededed" font-weight="normal" textLength="27.6" lengthAdjust="spacingAndGlyphs">0,33</text>
<text x="1141.2" y="733.2" font-size="19" text-anchor="start" fill="#ededed" font-weight="normal" textLength="27.6" lengthAdjust="spacingAndGlyphs">0,33</text>
<text x="1202.3" y="733.2" font-size="19" text-anchor="start" fill="#ededed" font-weight="normal" textLength="27.6" lengthAdjust="spacingAndGlyphs">0,33</text>
<text x="1263.4" y="733.2" font-size="19" text-anchor="start" fill="#ededed" font-weight="normal" textLength="27.6" lengthAdjust="spacingAndGlyphs">0,33</text>
<text x="1324.5" y="733.2" font-size="19" text-anchor="start" fill="#ededed" font-weight="normal" textLength="27.6" lengthAdjust="spacingAndGlyphs">0,33</text>
<text x="1385.6" y="733.2" font-size="19" text-anchor="start" fill="#ededed" font-weight="normal" textLength="27.6" lengthAdjust="spacingAndGlyphs">0,33</text>
<text x="654.0" y="761.1" font-size="19" text-anchor="start" fill="#f0f0f0" font-weight="normal" textLength="8.5" lengthAdjust="spacingAndGlyphs">Y</text>
<text x="774.6" y="761.1" font-size="19" text-anchor="start" fill="#f0f0f0" font-weight="normal" textLength="27.6" lengthAdjust="spacingAndGlyphs">0,82</text>
<text x="835.7" y="761.1" font-size="19" text-anchor="start" fill="#f0f0f0" font-weight="normal" textLength="27.6" lengthAdjust="spacingAndGlyphs">1,98</text>
<text x="896.8" y="761.1" font-size="19" text-anchor="start" fill="#f0f0f0" font-weight="normal" textLength="27.6" lengthAdjust="spacingAndGlyphs">5,84</text>
<text x="957.9" y="761.1" font-size="19" text-anchor="start" fill="#f0f0f0" font-weight="normal" textLength="35.6" lengthAdjust="spacingAndGlyphs">12,93</text>
<text x="1019.0" y="761.1" font-size="19" text-anchor="start" fill="#f0f0f0" font-weight="normal" textLength="35.6" lengthAdjust="spacingAndGlyphs">24,29</text>
<text x="1080.1" y="761.1" font-size="19" text-anchor="start" fill="#f0f0f0" font-weight="normal" textLength="35.6" lengthAdjust="spacingAndGlyphs">39,58</text>
<text x="1141.2" y="761.1" font-size="19" text-anchor="start" fill="#f0f0f0" font-weight="normal" textLength="35.6" lengthAdjust="spacingAndGlyphs">58,80</text>
<text x="1202.3" y="761.1" font-size="19" text-anchor="start" fill="#f0f0f0" font-weight="normal" textLength="35.6" lengthAdjust="spacingAndGlyphs">82,20</text>
<text x="1263.4" y="761.1" font-size="19" text-anchor="start" fill="#f0f0f0" font-weight="normal" textLength="43.6" lengthAdjust="spacingAndGlyphs">112,13</text>
<text x="1324.5" y="761.1" font-size="19" text-anchor="start" fill="#f0f0f0" font-weight="normal" textLength="43.6" lengthAdjust="spacingAndGlyphs">145,16</text>
<text x="1385.6" y="761.1" font-size="19" text-anchor="start" fill="#f0f0f0" font-weight="normal" textLength="43.6" lengthAdjust="spacingAndGlyphs">182,38</text>
<text x="654.0" y="789.0" font-size="19" text-anchor="start" fill="#ededed" font-weight="normal" textLength="53.0" lengthAdjust="spacingAndGlyphs">Target Y</text>
<text x="774.6" y="789.0" font-size="19" text-anchor="start" fill="#ededed" font-weight="normal" textLength="27.6" lengthAdjust="spacingAndGlyphs">0,00</text>
<text x="835.7" y="789.0" font-size="19" text-anchor="start" fill="#ededed" font-weight="normal" textLength="27.6" lengthAdjust="spacingAndGlyphs">1,88</text>
<text x="896.8" y="789.0" font-size="19" text-anchor="start" fill="#ededed" font-weight="normal" textLength="27.6" lengthAdjust="spacingAndGlyphs">6,04</text>
<text x="957.9" y="789.0" font-size="19" text-anchor="start" fill="#ededed" font-weight="normal" textLength="35.6" lengthAdjust="spacingAndGlyphs">13,18</text>
<text x="1019.0" y="789.0" font-size="19" text-anchor="start" fill="#ededed" font-weight="normal" textLength="35.6" lengthAdjust="spacingAndGlyphs">24,23</text>
<text x="1080.1" y="789.0" font-size="19" text-anchor="start" fill="#ededed" font-weight="normal" textLength="35.6" lengthAdjust="spacingAndGlyphs">39,37</text>
<text x="1141.2" y="789.0" font-size="19" text-anchor="start" fill="#ededed" font-weight="normal" textLength="35.6" lengthAdjust="spacingAndGlyphs">58,10</text>
<text x="1202.3" y="789.0" font-size="19" text-anchor="start" fill="#ededed" font-weight="normal" textLength="35.6" lengthAdjust="spacingAndGlyphs">81,20</text>
<text x="1263.4" y="789.0" font-size="19" text-anchor="start" fill="#ededed" font-weight="normal" textLength="43.6" lengthAdjust="spacingAndGlyphs">110,13</text>
<text x="1324.5" y="789.0" font-size="19" text-anchor="start" fill="#ededed" font-weight="normal" textLength="43.6" lengthAdjust="spacingAndGlyphs">144,32</text>
<text x="1385.6" y="789.0" font-size="19" text-anchor="start" fill="#ededed" font-weight="normal" textLength="43.6" lengthAdjust="spacingAndGlyphs">182,38</text>
<text x="654.0" y="816.9" font-size="19" text-anchor="start" fill="#f0f0f0" font-weight="normal" textLength="111.0" lengthAdjust="spacingAndGlyphs">Gamma Log/Log</text>
<text x="774.6" y="816.9" font-size="19" text-anchor="start" fill="#f0f0f0" font-weight="normal" textLength="27.6" lengthAdjust="spacingAndGlyphs">1,28</text>
<text x="835.7" y="816.9" font-size="19" text-anchor="start" fill="#f0f0f0" font-weight="normal" textLength="27.6" lengthAdjust="spacingAndGlyphs">1,98</text>
<text x="896.8" y="816.9" font-size="19" text-anchor="start" fill="#f0f0f0" font-weight="normal" textLength="27.6" lengthAdjust="spacingAndGlyphs">2,14</text>
<text x="957.9" y="816.9" font-size="19" text-anchor="start" fill="#f0f0f0" font-weight="normal" textLength="27.6" lengthAdjust="spacingAndGlyphs">2,19</text>
<text x="1019.0" y="816.9" font-size="19" text-anchor="start" fill="#f0f0f0" font-weight="normal" textLength="27.6" lengthAdjust="spacingAndGlyphs">2,20</text>
<text x="1080.1" y="816.9" font-size="19" text-anchor="start" fill="#f0f0f0" font-weight="normal" textLength="27.6" lengthAdjust="spacingAndGlyphs">2,22</text>
<text x="1141.2" y="816.9" font-size="19" text-anchor="start" fill="#f0f0f0" font-weight="normal" textLength="27.6" lengthAdjust="spacingAndGlyphs">2,22</text>
<text x="1202.3" y="816.9" font-size="19" text-anchor="start" fill="#f0f0f0" font-weight="normal" textLength="27.6" lengthAdjust="spacingAndGlyphs">2,22</text>
<text x="1263.4" y="816.9" font-size="19" text-anchor="start" fill="#f0f0f0" font-weight="normal" textLength="27.6" lengthAdjust="spacingAndGlyphs">2,18</text>
<text x="1324.5" y="816.9" font-size="19" text-anchor="start" fill="#f0f0f0" font-weight="normal" textLength="27.6" lengthAdjust="spacingAndGlyphs">2,21</text>
<text x="1385.6" y="816.9" font-size="19" text-anchor="start" fill="#f0f0f0" font-weight="normal" textLength="27.6" lengthAdjust="spacingAndGlyphs">2,27</text>
<text x="654.0" y="844.9" font-size="19" text-anchor="start" fill="#ededed" font-weight="normal" textLength="25.5" lengthAdjust="spacingAndGlyphs">CCT</text>
<text x="774.6" y="844.9" font-size="19" text-anchor="start" fill="#ededed" font-weight="normal" textLength="51.6" lengthAdjust="spacingAndGlyphs">8664,00</text>
<text x="835.7" y="844.9" font-size="19" text-anchor="start" fill="#ededed" font-weight="normal" textLength="51.6" lengthAdjust="spacingAndGlyphs">6125,00</text>
<text x="896.8" y="844.9" font-size="19" text-anchor="start" fill="#ededed" font-weight="normal" textLength="51.6" lengthAdjust="spacingAndGlyphs">6331,00</text>
<text x="957.9" y="844.9" font-size="19" text-anchor="start" fill="#ededed" font-weight="normal" textLength="51.6" lengthAdjust="spacingAndGlyphs">6417,00</text>
<text x="1019.0" y="844.9" font-size="19" text-anchor="start" fill="#ededed" font-weight="normal" textLength="51.6" lengthAdjust="spacingAndGlyphs">6436,00</text>
<text x="1080.1" y="844.9" font-size="19" text-anchor="start" fill="#ededed" font-weight="normal" textLength="51.6" lengthAdjust="spacingAndGlyphs">6470,00</text>
<text x="1141.2" y="844.9" font-size="19" text-anchor="start" fill="#ededed" font-weight="normal" textLength="51.6" lengthAdjust="spacingAndGlyphs">6464,00</text>
<text x="1202.3" y="844.9" font-size="19" text-anchor="start" fill="#ededed" font-weight="normal" textLength="51.6" lengthAdjust="spacingAndGlyphs">6438,00</text>
<text x="1263.4" y="844.9" font-size="19" text-anchor="start" fill="#ededed" font-weight="normal" textLength="51.6" lengthAdjust="spacingAndGlyphs">6358,00</text>
<text x="1324.5" y="844.9" font-size="19" text-anchor="start" fill="#ededed" font-weight="normal" textLength="51.6" lengthAdjust="spacingAndGlyphs">6445,00</text>
<text x="1385.6" y="844.9" font-size="19" text-anchor="start" fill="#ededed" font-weight="normal" textLength="51.6" lengthAdjust="spacingAndGlyphs">6529,00</text>
<text x="654.0" y="872.8" font-size="19" text-anchor="start" fill="#f0f0f0" font-weight="normal" textLength="54.0" lengthAdjust="spacingAndGlyphs">ΔE 2000</text>
<text x="774.6" y="872.8" font-size="19" text-anchor="start" fill="#f0f0f0" font-weight="normal" textLength="27.6" lengthAdjust="spacingAndGlyphs">3,00</text>
<text x="835.7" y="872.8" font-size="19" text-anchor="start" fill="#f0f0f0" font-weight="normal" textLength="27.6" lengthAdjust="spacingAndGlyphs">1,85</text>
<text x="896.8" y="872.8" font-size="19" text-anchor="start" fill="#f0f0f0" font-weight="normal" textLength="27.6" lengthAdjust="spacingAndGlyphs">1,02</text>
<text x="957.9" y="872.8" font-size="19" text-anchor="start" fill="#f0f0f0" font-weight="normal" textLength="27.6" lengthAdjust="spacingAndGlyphs">0,85</text>
<text x="1019.0" y="872.8" font-size="19" text-anchor="start" fill="#f0f0f0" font-weight="normal" textLength="27.6" lengthAdjust="spacingAndGlyphs">0,79</text>
<text x="1080.1" y="872.8" font-size="19" text-anchor="start" fill="#f0f0f0" font-weight="normal" textLength="27.6" lengthAdjust="spacingAndGlyphs">0,81</text>
<text x="1141.2" y="872.8" font-size="19" text-anchor="start" fill="#f0f0f0" font-weight="normal" textLength="27.6" lengthAdjust="spacingAndGlyphs">0,80</text>
<text x="1202.3" y="872.8" font-size="19" text-anchor="start" fill="#f0f0f0" font-weight="normal" textLength="27.6" lengthAdjust="spacingAndGlyphs">0,78</text>
<text x="1263.4" y="872.8" font-size="19" text-anchor="start" fill="#f0f0f0" font-weight="normal" textLength="27.6" lengthAdjust="spacingAndGlyphs">1,88</text>
<text x="1324.5" y="872.8" font-size="19" text-anchor="start" fill="#f0f0f0" font-weight="normal" textLength="27.6" lengthAdjust="spacingAndGlyphs">1,43</text>
<text x="1385.6" y="872.8" font-size="19" text-anchor="start" fill="#f0f0f0" font-weight="normal" textLength="27.6" lengthAdjust="spacingAndGlyphs">0,48</text>
</svg></body></html>
